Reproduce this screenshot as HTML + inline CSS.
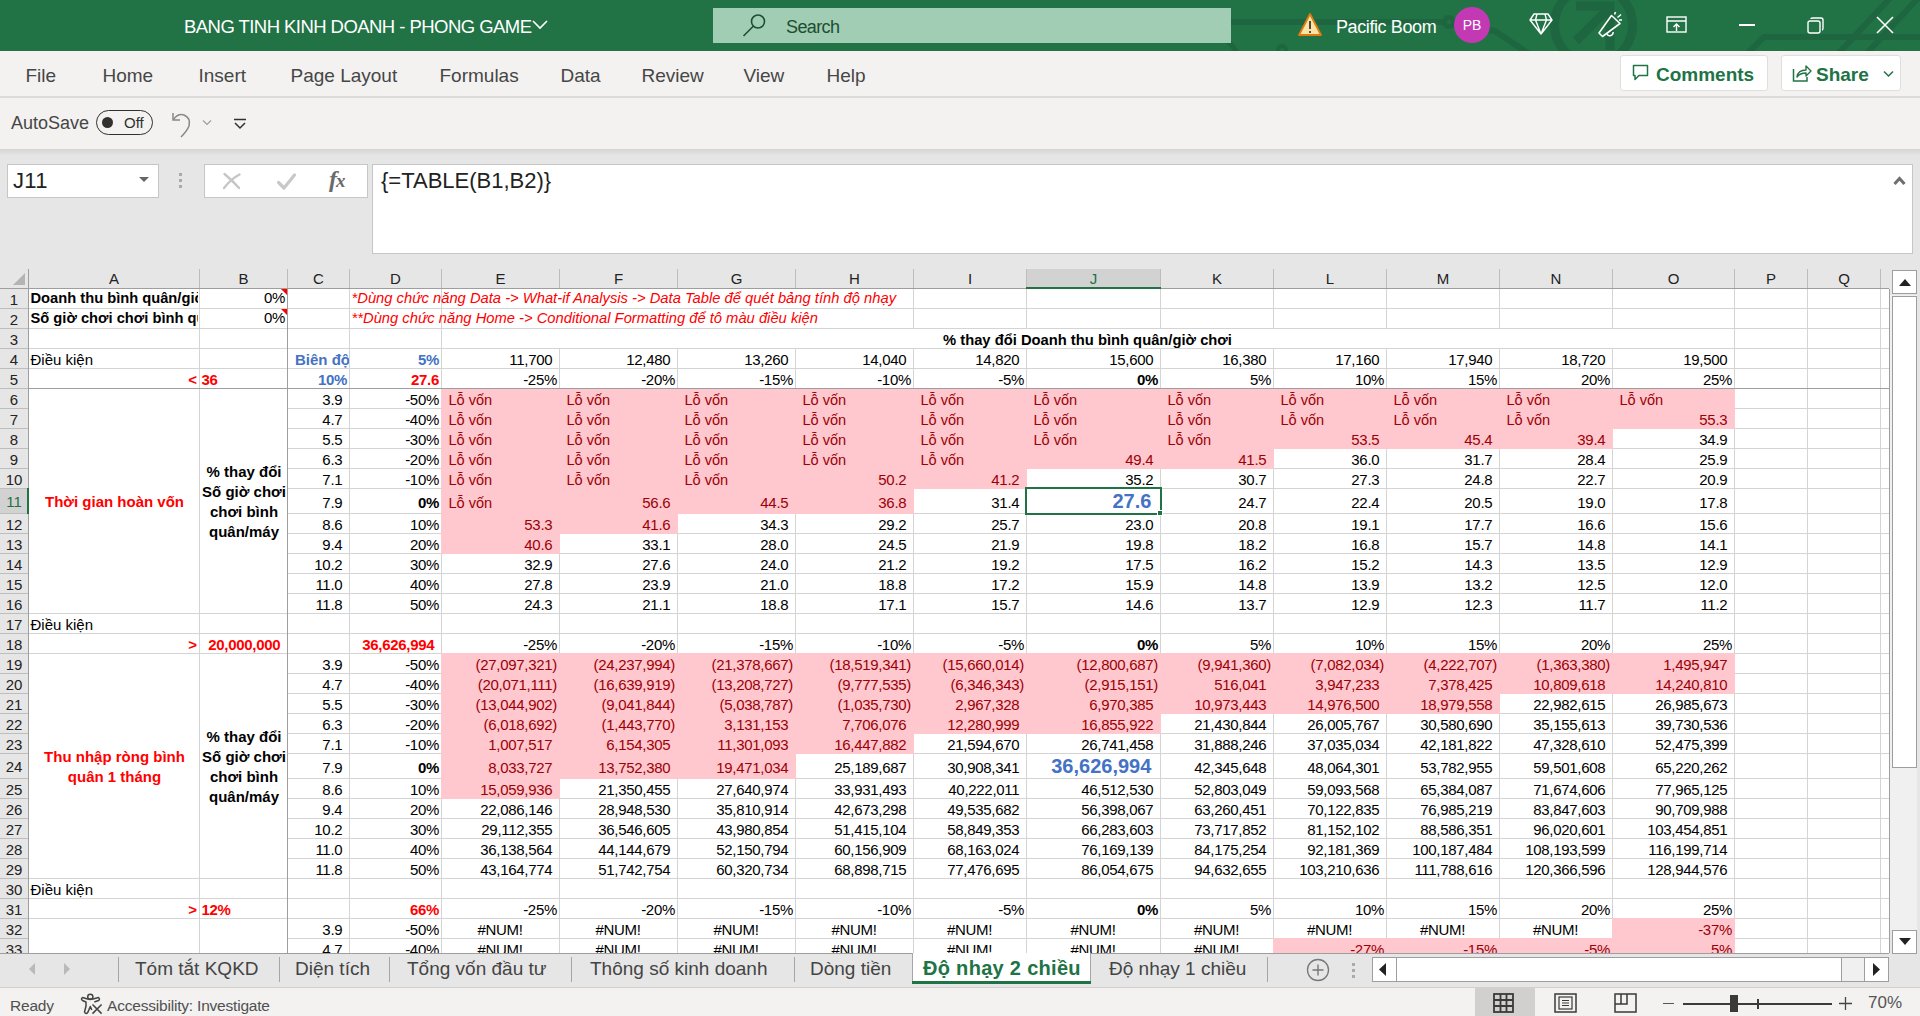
<!DOCTYPE html>
<html><head><meta charset="utf-8">
<style>
*{box-sizing:border-box}
html,body{margin:0;padding:0}
body{width:1920px;height:1016px;overflow:hidden;position:relative;font-family:"Liberation Sans",sans-serif;background:#e6e6e6}
.abs{position:absolute}
#title{position:absolute;left:0;top:0;width:1920px;height:51px;background:#217346;overflow:hidden}
#menu{position:absolute;left:0;top:51px;width:1920px;height:98px;background:#f3f2f1}
#fbar{position:absolute;left:0;top:149px;width:1920px;height:120px;background:#e6e6e6}
.mt{position:absolute;top:65px;font-size:19px;color:#464646;line-height:22px;white-space:nowrap}
#gridwrap{position:absolute;left:0;top:0;width:1920px;height:1016px}
.t{position:absolute;white-space:nowrap}
.pk{position:absolute;background:#ffc7ce}
.gl{position:absolute;background:#d4d4d4}
.wc{position:absolute;background:#fff}
.hl{position:absolute;background:#bdbdbd}
.ch{position:absolute;top:269px;height:19px;line-height:20px;font-size:15px;text-align:center}
.rh{position:absolute;left:0;width:28px;font-size:15px;text-align:center}
</style></head><body>
<!-- TITLE BAR -->
<div id="title">
  <svg class="abs" style="left:0;top:0" width="1920" height="51">
    <g stroke="#1e6640" fill="none">
      <path d="M1231 22 L1445 22" stroke-width="6"/>
      <circle cx="1449" cy="22" r="4.5" stroke-width="5"/>
      <path d="M1453 24 L1495 31 L1532 56" stroke-width="6"/>
      <path d="M1222 38 Q1234 44 1238 56" stroke-width="5"/>
      <circle cx="1282" cy="50" r="4" stroke-width="4"/>
      <circle cx="1593.5" cy="25" r="39" stroke-width="9"/>
      <path d="M1576 6 L1610 6 L1610 50 M1609 8 L1576 41" stroke-width="9"/>
      <path d="M1746 55 L1764 37 L1925 37" stroke-width="6"/>
      <path d="M1838 54 L1892 -4" stroke-width="6"/>
      <path d="M1866 54 L1920 -4" stroke-width="6"/>
    </g>
  </svg>
  <div class="abs" style="left:184px;top:16px;font-size:18.5px;line-height:22px;color:#fff;white-space:nowrap;letter-spacing:-0.55px">BANG TINH KINH DOANH - PHONG GAME</div>
  <svg class="abs" style="left:532px;top:19px" width="16" height="12"><path d="M1 2 L8 9 L15 2" stroke="#fff" stroke-width="1.6" fill="none"/></svg>
  <div class="abs" style="left:713px;top:8px;width:518px;height:35px;background:#a0cdb4"></div>
  <svg class="abs" style="left:740px;top:12px" width="28" height="26"><circle cx="18" cy="9.5" r="6.5" stroke="#1d4f31" stroke-width="1.6" fill="none"/><path d="M13.5 14 L3.5 24" stroke="#1d4f31" stroke-width="1.6"/></svg>
  <div class="abs" style="left:786px;top:16px;font-size:18px;line-height:22px;color:#1d4f31;white-space:nowrap;letter-spacing:-0.6px">Search</div>
  <svg class="abs" style="left:1297px;top:12px" width="26" height="26"><path d="M13 2 L24 23 L2 23 Z" fill="#fbe3a6" stroke="#e07b12" stroke-width="1.8" stroke-linejoin="round"/><path d="M13 9 L13 17" stroke="#222" stroke-width="1.6"/><circle cx="13" cy="20" r="1" fill="#222"/></svg>
  <div class="abs" style="left:1336px;top:16px;font-size:18px;line-height:22px;color:#fff;white-space:nowrap;letter-spacing:-0.4px">Pacific Boom</div>
  <div class="abs" style="left:1454px;top:7px;width:36px;height:36px;border-radius:50%;background:#c239b3;color:#fff;font-size:14px;line-height:36px;text-align:center">PB</div>
  <svg class="abs" style="left:1528px;top:12px" width="26" height="24"><path d="M6 2 L20 2 L24 8 L13 22 L2 8 Z M2 8 L24 8 M9 2 L7.5 8 L13 22 L18.5 8 L17 2" stroke="#fff" stroke-width="1.4" fill="none" stroke-linejoin="round"/></svg>
  <svg class="abs" style="left:1596px;top:10px" width="32" height="30"><path d="M3 23 L15.5 5.5 L24 13.5 L6.5 26.5 Z" stroke="#fff" stroke-width="1.6" fill="none" stroke-linejoin="round"/><path d="M11 24 a3.2 3.2 0 0 0 6 -2" stroke="#fff" stroke-width="1.6" fill="none"/><path d="M18.5 4.5 L19.5 2 M21.5 7.5 L25 4.5 M23 10 L26 10" stroke="#fff" stroke-width="1.6"/></svg>
  <svg class="abs" style="left:1666px;top:15px" width="22" height="20"><rect x="1" y="2" width="19" height="15" stroke="#fff" stroke-width="1.4" fill="none"/><path d="M1 6 L20 6 M10.5 16 L10.5 9 M7.5 12 L10.5 9 L13.5 12" stroke="#fff" stroke-width="1.4" fill="none"/></svg>
  <div class="abs" style="left:1739px;top:24px;width:16px;height:1.5px;background:#fff"></div>
  <svg class="abs" style="left:1806px;top:16px" width="20" height="20"><rect x="2" y="5" width="12" height="12" rx="2" stroke="#fff" stroke-width="1.4" fill="none"/><path d="M5 3 Q5 2 7 2 L15 2 Q17 2 17 4 L17 12 Q17 14 16 14" stroke="#fff" stroke-width="1.4" fill="none"/></svg>
  <svg class="abs" style="left:1876px;top:16px" width="18" height="18"><path d="M1 1 L17 17 M17 1 L1 17" stroke="#fff" stroke-width="1.6"/></svg>
</div>

<!-- MENU + QAT -->
<div id="menu">
</div>
<div class="mt" style="left:25.5px">File</div>
<div class="mt" style="left:102.5px">Home</div>
<div class="mt" style="left:198.5px">Insert</div>
<div class="mt" style="left:290.5px">Page Layout</div>
<div class="mt" style="left:439.5px">Formulas</div>
<div class="mt" style="left:560.5px">Data</div>
<div class="mt" style="left:641.5px">Review</div>
<div class="mt" style="left:743.5px">View</div>
<div class="mt" style="left:826.5px">Help</div>
<div class="abs" style="left:0;top:96px;width:1920px;height:2px;background:#dcdad8"></div>
<div class="abs" style="left:1620px;top:55px;width:148px;height:36px;background:#fff;border:1px solid #e1dfdd;border-radius:3px"></div>
<svg class="abs" style="left:1632px;top:64px" width="18" height="18"><path d="M1.5 1.5 L15.5 1.5 L15.5 11.5 L7 11.5 L3 15.5 L3 11.5 L1.5 11.5 Z" stroke="#217346" stroke-width="1.5" fill="none" stroke-linejoin="round"/></svg>
<div class="abs" style="left:1656px;top:64px;font-size:19px;line-height:22px;font-weight:bold;color:#217346;white-space:nowrap">Comments</div>
<div class="abs" style="left:1781px;top:55px;width:120px;height:36px;background:#fff;border:1px solid #e1dfdd;border-radius:3px"></div>
<svg class="abs" style="left:1792px;top:63px" width="20" height="20"><path d="M1.5 6 L1.5 18 L15 18 L15 14" stroke="#217346" stroke-width="1.5" fill="none"/><path d="M5 14 Q6 7 14 7 L14 3 L19 8 L14 13 L14 10 Q8 10 5 14 Z" stroke="#217346" stroke-width="1.4" fill="none" stroke-linejoin="round"/></svg>
<div class="abs" style="left:1816px;top:64px;font-size:19px;line-height:22px;font-weight:bold;color:#217346;white-space:nowrap">Share</div>
<svg class="abs" style="left:1883px;top:70px" width="12" height="8"><path d="M1 1.5 L5.5 6 L10 1.5" stroke="#217346" stroke-width="1.5" fill="none"/></svg>

<div class="abs" style="left:11px;top:112px;font-size:18px;line-height:22px;color:#464646;white-space:nowrap">AutoSave</div>
<div class="abs" style="left:96px;top:110px;width:57px;height:25px;border:1px solid #323130;border-radius:13px"></div>
<div class="abs" style="left:102px;top:117px;width:11px;height:11px;border-radius:50%;background:#323130"></div>
<div class="abs" style="left:124px;top:114px;font-size:15px;line-height:17px;color:#323130">Off</div>
<svg class="abs" style="left:170px;top:109px" width="26" height="30"><path d="M3 4 L3 11 L10 11" stroke="#8a8886" stroke-width="1.5" fill="none"/><path d="M3.5 10.5 Q8 4 14 6 Q21 9 19 17 Q17 22 11 28" stroke="#8a8886" stroke-width="1.5" fill="none"/></svg>
<svg class="abs" style="left:202px;top:119px" width="10" height="8"><path d="M1 1.5 L5 5.5 L9 1.5" stroke="#a19f9d" stroke-width="1.2" fill="none"/></svg>
<svg class="abs" style="left:233px;top:118px" width="14" height="12"><path d="M1 1.5 L13 1.5" stroke="#323130" stroke-width="1.5"/><path d="M2 5 L7 10 L12 5" stroke="#323130" stroke-width="1.5" fill="none"/></svg>

<!-- FORMULA BAR -->
<div id="fbar"></div>
<div class="abs" style="left:0;top:149px;width:1920px;height:7px;background:linear-gradient(#d5d5d5,#e6e6e6)"></div>
<div class="abs" style="left:7px;top:164px;width:152px;height:34px;background:#fff;border:1px solid #c6c6c6"></div>
<div class="abs" style="left:13px;top:168.5px;font-size:22px;line-height:24px;color:#222;letter-spacing:0.3px">J11</div>
<svg class="abs" style="left:139px;top:177px" width="10" height="6"><path d="M0 0 L10 0 L5 5 Z" fill="#666"/></svg>
<div class="abs" style="left:179px;top:173px;width:3px;height:3px;background:#aaa"></div>
<div class="abs" style="left:179px;top:179px;width:3px;height:3px;background:#aaa"></div>
<div class="abs" style="left:179px;top:185px;width:3px;height:3px;background:#aaa"></div>
<div class="abs" style="left:204px;top:164px;width:164px;height:34px;background:#fff;border:1px solid #c6c6c6"></div>
<svg class="abs" style="left:220px;top:171px" width="22" height="20"><path d="M4.5 3 Q12 9 19 17 M19.5 3.5 Q11 8 4 17" stroke="#c6c6c6" stroke-width="2.4" stroke-linecap="round" fill="none"/></svg>
<svg class="abs" style="left:275px;top:172px" width="22" height="19"><path d="M3.5 10.5 L9 16 L19.5 3" stroke="#c8c8c8" stroke-width="3.2" stroke-linecap="round" stroke-linejoin="round" fill="none"/></svg>
<div class="abs" style="left:329px;top:165px;font-family:'Liberation Serif',serif;font-style:italic;font-weight:bold;font-size:24px;line-height:28px;color:#6a6a6a">f<span style="font-size:19px;margin-left:-1px">x</span></div>
<div class="abs" style="left:372px;top:164px;width:1541px;height:90px;background:#fff;border:1px solid #c6c6c6"></div>
<div class="abs" style="left:381px;top:169px;font-size:22px;line-height:24px;color:#222;white-space:nowrap">{=TABLE(B1,B2)}</div>
<svg class="abs" style="left:1893px;top:176px" width="13" height="10"><path d="M1.5 8 L6.5 2.5 L11.5 8" stroke="#6e6e6e" stroke-width="3" fill="none" stroke-linejoin="miter"/></svg>

<!-- GRID -->
<div class="abs" style="left:29px;top:289px;width:1860px;height:664px;background:#fff"></div>
<div class="gl" style="left:199px;top:289px;width:1px;height:664px"></div><div class="gl" style="left:287px;top:289px;width:1px;height:664px"></div><div class="gl" style="left:349px;top:289px;width:1px;height:664px"></div><div class="gl" style="left:441px;top:289px;width:1px;height:664px"></div><div class="gl" style="left:559px;top:289px;width:1px;height:664px"></div><div class="gl" style="left:677px;top:289px;width:1px;height:664px"></div><div class="gl" style="left:795px;top:289px;width:1px;height:664px"></div><div class="gl" style="left:913px;top:289px;width:1px;height:664px"></div><div class="gl" style="left:1026px;top:289px;width:1px;height:664px"></div><div class="gl" style="left:1160px;top:289px;width:1px;height:664px"></div><div class="gl" style="left:1273px;top:289px;width:1px;height:664px"></div><div class="gl" style="left:1386px;top:289px;width:1px;height:664px"></div><div class="gl" style="left:1499px;top:289px;width:1px;height:664px"></div><div class="gl" style="left:1612px;top:289px;width:1px;height:664px"></div><div class="gl" style="left:1734px;top:289px;width:1px;height:664px"></div><div class="gl" style="left:1807px;top:289px;width:1px;height:664px"></div><div class="gl" style="left:1880px;top:289px;width:1px;height:664px"></div><div class="gl" style="left:29px;top:308px;width:1860px;height:1px"></div><div class="gl" style="left:29px;top:328px;width:1860px;height:1px"></div><div class="gl" style="left:29px;top:348px;width:1860px;height:1px"></div><div class="gl" style="left:29px;top:368px;width:1860px;height:1px"></div><div class="gl" style="left:29px;top:388px;width:1860px;height:1px"></div><div class="gl" style="left:29px;top:408px;width:1860px;height:1px"></div><div class="gl" style="left:29px;top:428px;width:1860px;height:1px"></div><div class="gl" style="left:29px;top:448px;width:1860px;height:1px"></div><div class="gl" style="left:29px;top:468px;width:1860px;height:1px"></div><div class="gl" style="left:29px;top:488px;width:1860px;height:1px"></div><div class="gl" style="left:29px;top:513px;width:1860px;height:1px"></div><div class="gl" style="left:29px;top:533px;width:1860px;height:1px"></div><div class="gl" style="left:29px;top:553px;width:1860px;height:1px"></div><div class="gl" style="left:29px;top:573px;width:1860px;height:1px"></div><div class="gl" style="left:29px;top:593px;width:1860px;height:1px"></div><div class="gl" style="left:29px;top:613px;width:1860px;height:1px"></div><div class="gl" style="left:29px;top:633px;width:1860px;height:1px"></div><div class="gl" style="left:29px;top:653px;width:1860px;height:1px"></div><div class="gl" style="left:29px;top:673px;width:1860px;height:1px"></div><div class="gl" style="left:29px;top:693px;width:1860px;height:1px"></div><div class="gl" style="left:29px;top:713px;width:1860px;height:1px"></div><div class="gl" style="left:29px;top:733px;width:1860px;height:1px"></div><div class="gl" style="left:29px;top:753px;width:1860px;height:1px"></div><div class="gl" style="left:29px;top:778px;width:1860px;height:1px"></div><div class="gl" style="left:29px;top:798px;width:1860px;height:1px"></div><div class="gl" style="left:29px;top:818px;width:1860px;height:1px"></div><div class="gl" style="left:29px;top:838px;width:1860px;height:1px"></div><div class="gl" style="left:29px;top:858px;width:1860px;height:1px"></div><div class="gl" style="left:29px;top:878px;width:1860px;height:1px"></div><div class="gl" style="left:29px;top:898px;width:1860px;height:1px"></div><div class="gl" style="left:29px;top:918px;width:1860px;height:1px"></div><div class="gl" style="left:29px;top:938px;width:1860px;height:1px"></div>
<div class="wc" style="left:442px;top:289px;width:471px;height:19px"></div><div class="wc" style="left:442px;top:309px;width:471px;height:19px"></div><div class="wc" style="left:442px;top:329px;width:1292px;height:19px"></div><div class="wc" style="left:29px;top:389px;width:170px;height:224px"></div><div class="wc" style="left:200px;top:389px;width:87px;height:224px"></div><div class="wc" style="left:29px;top:654px;width:170px;height:224px"></div><div class="wc" style="left:200px;top:654px;width:87px;height:224px"></div><div class="wc" style="left:29px;top:919px;width:170px;height:34px"></div><div class="wc" style="left:200px;top:919px;width:87px;height:34px"></div>
<div class="pk" style="left:441px;top:388px;width:119px;height:21px"></div><div class="pk" style="left:559px;top:388px;width:119px;height:21px"></div><div class="pk" style="left:677px;top:388px;width:119px;height:21px"></div><div class="pk" style="left:795px;top:388px;width:119px;height:21px"></div><div class="pk" style="left:913px;top:388px;width:114px;height:21px"></div><div class="pk" style="left:1026px;top:388px;width:135px;height:21px"></div><div class="pk" style="left:1160px;top:388px;width:114px;height:21px"></div><div class="pk" style="left:1273px;top:388px;width:114px;height:21px"></div><div class="pk" style="left:1386px;top:388px;width:114px;height:21px"></div><div class="pk" style="left:1499px;top:388px;width:114px;height:21px"></div><div class="pk" style="left:1612px;top:388px;width:123px;height:21px"></div><div class="pk" style="left:441px;top:653px;width:119px;height:21px"></div><div class="pk" style="left:559px;top:653px;width:119px;height:21px"></div><div class="pk" style="left:677px;top:653px;width:119px;height:21px"></div><div class="pk" style="left:795px;top:653px;width:119px;height:21px"></div><div class="pk" style="left:913px;top:653px;width:114px;height:21px"></div><div class="pk" style="left:1026px;top:653px;width:135px;height:21px"></div><div class="pk" style="left:1160px;top:653px;width:114px;height:21px"></div><div class="pk" style="left:1273px;top:653px;width:114px;height:21px"></div><div class="pk" style="left:1386px;top:653px;width:114px;height:21px"></div><div class="pk" style="left:1499px;top:653px;width:114px;height:21px"></div><div class="pk" style="left:1612px;top:653px;width:123px;height:21px"></div><div class="pk" style="left:441px;top:408px;width:119px;height:21px"></div><div class="pk" style="left:559px;top:408px;width:119px;height:21px"></div><div class="pk" style="left:677px;top:408px;width:119px;height:21px"></div><div class="pk" style="left:795px;top:408px;width:119px;height:21px"></div><div class="pk" style="left:913px;top:408px;width:114px;height:21px"></div><div class="pk" style="left:1026px;top:408px;width:135px;height:21px"></div><div class="pk" style="left:1160px;top:408px;width:114px;height:21px"></div><div class="pk" style="left:1273px;top:408px;width:114px;height:21px"></div><div class="pk" style="left:1386px;top:408px;width:114px;height:21px"></div><div class="pk" style="left:1499px;top:408px;width:114px;height:21px"></div><div class="pk" style="left:1612px;top:408px;width:123px;height:21px"></div><div class="pk" style="left:441px;top:673px;width:119px;height:21px"></div><div class="pk" style="left:559px;top:673px;width:119px;height:21px"></div><div class="pk" style="left:677px;top:673px;width:119px;height:21px"></div><div class="pk" style="left:795px;top:673px;width:119px;height:21px"></div><div class="pk" style="left:913px;top:673px;width:114px;height:21px"></div><div class="pk" style="left:1026px;top:673px;width:135px;height:21px"></div><div class="pk" style="left:1160px;top:673px;width:114px;height:21px"></div><div class="pk" style="left:1273px;top:673px;width:114px;height:21px"></div><div class="pk" style="left:1386px;top:673px;width:114px;height:21px"></div><div class="pk" style="left:1499px;top:673px;width:114px;height:21px"></div><div class="pk" style="left:1612px;top:673px;width:123px;height:21px"></div><div class="pk" style="left:441px;top:428px;width:119px;height:21px"></div><div class="pk" style="left:559px;top:428px;width:119px;height:21px"></div><div class="pk" style="left:677px;top:428px;width:119px;height:21px"></div><div class="pk" style="left:795px;top:428px;width:119px;height:21px"></div><div class="pk" style="left:913px;top:428px;width:114px;height:21px"></div><div class="pk" style="left:1026px;top:428px;width:135px;height:21px"></div><div class="pk" style="left:1160px;top:428px;width:114px;height:21px"></div><div class="pk" style="left:1273px;top:428px;width:114px;height:21px"></div><div class="pk" style="left:1386px;top:428px;width:114px;height:21px"></div><div class="pk" style="left:1499px;top:428px;width:114px;height:21px"></div><div class="pk" style="left:441px;top:693px;width:119px;height:21px"></div><div class="pk" style="left:559px;top:693px;width:119px;height:21px"></div><div class="pk" style="left:677px;top:693px;width:119px;height:21px"></div><div class="pk" style="left:795px;top:693px;width:119px;height:21px"></div><div class="pk" style="left:913px;top:693px;width:114px;height:21px"></div><div class="pk" style="left:1026px;top:693px;width:135px;height:21px"></div><div class="pk" style="left:1160px;top:693px;width:114px;height:21px"></div><div class="pk" style="left:1273px;top:693px;width:114px;height:21px"></div><div class="pk" style="left:1386px;top:693px;width:114px;height:21px"></div><div class="pk" style="left:441px;top:448px;width:119px;height:21px"></div><div class="pk" style="left:559px;top:448px;width:119px;height:21px"></div><div class="pk" style="left:677px;top:448px;width:119px;height:21px"></div><div class="pk" style="left:795px;top:448px;width:119px;height:21px"></div><div class="pk" style="left:913px;top:448px;width:114px;height:21px"></div><div class="pk" style="left:1026px;top:448px;width:135px;height:21px"></div><div class="pk" style="left:1160px;top:448px;width:114px;height:21px"></div><div class="pk" style="left:441px;top:713px;width:119px;height:21px"></div><div class="pk" style="left:559px;top:713px;width:119px;height:21px"></div><div class="pk" style="left:677px;top:713px;width:119px;height:21px"></div><div class="pk" style="left:795px;top:713px;width:119px;height:21px"></div><div class="pk" style="left:913px;top:713px;width:114px;height:21px"></div><div class="pk" style="left:1026px;top:713px;width:135px;height:21px"></div><div class="pk" style="left:441px;top:468px;width:119px;height:21px"></div><div class="pk" style="left:559px;top:468px;width:119px;height:21px"></div><div class="pk" style="left:677px;top:468px;width:119px;height:21px"></div><div class="pk" style="left:795px;top:468px;width:119px;height:21px"></div><div class="pk" style="left:913px;top:468px;width:114px;height:21px"></div><div class="pk" style="left:441px;top:733px;width:119px;height:21px"></div><div class="pk" style="left:559px;top:733px;width:119px;height:21px"></div><div class="pk" style="left:677px;top:733px;width:119px;height:21px"></div><div class="pk" style="left:795px;top:733px;width:119px;height:21px"></div><div class="pk" style="left:441px;top:488px;width:119px;height:26px"></div><div class="pk" style="left:559px;top:488px;width:119px;height:26px"></div><div class="pk" style="left:677px;top:488px;width:119px;height:26px"></div><div class="pk" style="left:795px;top:488px;width:119px;height:26px"></div><div class="pk" style="left:441px;top:753px;width:119px;height:26px"></div><div class="pk" style="left:559px;top:753px;width:119px;height:26px"></div><div class="pk" style="left:677px;top:753px;width:119px;height:26px"></div><div class="pk" style="left:441px;top:513px;width:119px;height:21px"></div><div class="pk" style="left:559px;top:513px;width:119px;height:21px"></div><div class="pk" style="left:441px;top:778px;width:119px;height:21px"></div><div class="pk" style="left:441px;top:533px;width:119px;height:21px"></div><div class="pk" style="left:1612px;top:918px;width:123px;height:21px"></div><div class="pk" style="left:1273px;top:938px;width:114px;height:21px"></div><div class="pk" style="left:1386px;top:938px;width:114px;height:21px"></div><div class="pk" style="left:1499px;top:938px;width:114px;height:21px"></div><div class="pk" style="left:1612px;top:938px;width:123px;height:21px"></div>
<!-- freeze lines -->
<div class="abs" style="left:29px;top:388px;width:1860px;height:1px;background:#9e9e9e"></div>
<div class="abs" style="left:287px;top:289px;width:1px;height:664px;background:#9e9e9e"></div>
<div class="t" style="top:288.14px;height:20px;line-height:20px;font-size:14.7px;color:#000;letter-spacing:0px;font-weight:bold;left:30.5px;text-align:left;width:167.5px;overflow:hidden;">Doanh thu bình quân/giờ chơi</div><div class="t" style="top:308.14px;height:20px;line-height:20px;font-size:14.7px;color:#000;letter-spacing:0px;font-weight:bold;left:30.5px;text-align:left;width:167.5px;overflow:hidden;">Số giờ chơi chơi bình quân/máy</div><div class="t" style="top:288.04px;height:20px;line-height:20px;font-size:15px;color:#000;letter-spacing:-0.3px;left:-1px;width:286px;text-align:right;">0%</div><div class="t" style="top:308.04px;height:20px;line-height:20px;font-size:15px;color:#000;letter-spacing:-0.3px;left:-1px;width:286px;text-align:right;">0%</div><div class="t" style="top:288.13px;height:20px;line-height:20px;font-size:14.75px;color:#ff0000;letter-spacing:0px;font-style:italic;left:351.5px;text-align:left;">*Dùng chức năng Data -&gt; What-if Analysis -&gt; Data Table để quét bảng tính độ nhạy</div><div class="t" style="top:308.13px;height:20px;line-height:20px;font-size:14.75px;color:#ff0000;letter-spacing:0px;font-style:italic;left:351.5px;text-align:left;">**Dùng chức năng Home -&gt; Conditional Formatting để tô màu điều kiện</div><div class="t" style="top:329.63px;height:20px;line-height:20px;font-size:14.75px;color:#000;letter-spacing:0px;font-weight:bold;left:441px;width:1293px;text-align:center;">% thay đổi Doanh thu bình quân/giờ chơi</div><div class="t" style="top:349.54px;height:20px;line-height:20px;font-size:15px;color:#000;letter-spacing:0px;left:30.5px;text-align:left;">Điều kiện</div><div class="t" style="top:349.54px;height:20px;line-height:20px;font-size:15px;color:#4472c4;letter-spacing:0px;font-weight:bold;left:289.5px;text-align:left;left:295px;width:54px;overflow:hidden;">Biên độ</div><div class="t" style="top:349.54px;height:20px;line-height:20px;font-size:15px;color:#4472c4;letter-spacing:-0.3px;font-weight:bold;left:149px;width:290px;text-align:right;">5%</div><div class="t" style="top:349.54px;height:20px;line-height:20px;font-size:15px;color:#000;letter-spacing:-0.3px;left:241px;width:316px;text-align:right;">11,700<span style="visibility:hidden">)</span></div><div class="t" style="top:349.54px;height:20px;line-height:20px;font-size:15px;color:#000;letter-spacing:-0.3px;left:359px;width:316px;text-align:right;">12,480<span style="visibility:hidden">)</span></div><div class="t" style="top:349.54px;height:20px;line-height:20px;font-size:15px;color:#000;letter-spacing:-0.3px;left:477px;width:316px;text-align:right;">13,260<span style="visibility:hidden">)</span></div><div class="t" style="top:349.54px;height:20px;line-height:20px;font-size:15px;color:#000;letter-spacing:-0.3px;left:595px;width:316px;text-align:right;">14,040<span style="visibility:hidden">)</span></div><div class="t" style="top:349.54px;height:20px;line-height:20px;font-size:15px;color:#000;letter-spacing:-0.3px;left:713px;width:311px;text-align:right;">14,820<span style="visibility:hidden">)</span></div><div class="t" style="top:349.54px;height:20px;line-height:20px;font-size:15px;color:#000;letter-spacing:-0.3px;left:826px;width:332px;text-align:right;">15,600<span style="visibility:hidden">)</span></div><div class="t" style="top:349.54px;height:20px;line-height:20px;font-size:15px;color:#000;letter-spacing:-0.3px;left:960px;width:311px;text-align:right;">16,380<span style="visibility:hidden">)</span></div><div class="t" style="top:349.54px;height:20px;line-height:20px;font-size:15px;color:#000;letter-spacing:-0.3px;left:1073px;width:311px;text-align:right;">17,160<span style="visibility:hidden">)</span></div><div class="t" style="top:349.54px;height:20px;line-height:20px;font-size:15px;color:#000;letter-spacing:-0.3px;left:1186px;width:311px;text-align:right;">17,940<span style="visibility:hidden">)</span></div><div class="t" style="top:349.54px;height:20px;line-height:20px;font-size:15px;color:#000;letter-spacing:-0.3px;left:1299px;width:311px;text-align:right;">18,720<span style="visibility:hidden">)</span></div><div class="t" style="top:349.54px;height:20px;line-height:20px;font-size:15px;color:#000;letter-spacing:-0.3px;left:1412px;width:320px;text-align:right;">19,500<span style="visibility:hidden">)</span></div><div class="t" style="top:369.54px;height:20px;line-height:20px;font-size:15px;color:#ff0000;letter-spacing:0px;font-weight:bold;left:-172px;width:369px;text-align:right;">&lt;</div><div class="t" style="top:369.54px;height:20px;line-height:20px;font-size:15px;color:#ff0000;letter-spacing:-0.3px;font-weight:bold;left:201.5px;text-align:left;">36</div><div class="t" style="top:369.54px;height:20px;line-height:20px;font-size:15px;color:#4472c4;letter-spacing:-0.3px;font-weight:bold;left:87px;width:260px;text-align:right;">10%</div><div class="t" style="top:369.54px;height:20px;line-height:20px;font-size:15px;color:#ff0000;letter-spacing:-0.3px;font-weight:bold;left:149px;width:290px;text-align:right;">27.6</div><div class="t" style="top:369.54px;height:20px;line-height:20px;font-size:15px;color:#000;letter-spacing:-0.3px;left:241px;width:316px;text-align:right;">-25%</div><div class="t" style="top:369.54px;height:20px;line-height:20px;font-size:15px;color:#000;letter-spacing:-0.3px;left:359px;width:316px;text-align:right;">-20%</div><div class="t" style="top:369.54px;height:20px;line-height:20px;font-size:15px;color:#000;letter-spacing:-0.3px;left:477px;width:316px;text-align:right;">-15%</div><div class="t" style="top:369.54px;height:20px;line-height:20px;font-size:15px;color:#000;letter-spacing:-0.3px;left:595px;width:316px;text-align:right;">-10%</div><div class="t" style="top:369.54px;height:20px;line-height:20px;font-size:15px;color:#000;letter-spacing:-0.3px;left:713px;width:311px;text-align:right;">-5%</div><div class="t" style="top:369.54px;height:20px;line-height:20px;font-size:15px;color:#000;letter-spacing:-0.3px;font-weight:bold;left:826px;width:332px;text-align:right;">0%</div><div class="t" style="top:369.54px;height:20px;line-height:20px;font-size:15px;color:#000;letter-spacing:-0.3px;left:960px;width:311px;text-align:right;">5%</div><div class="t" style="top:369.54px;height:20px;line-height:20px;font-size:15px;color:#000;letter-spacing:-0.3px;left:1073px;width:311px;text-align:right;">10%</div><div class="t" style="top:369.54px;height:20px;line-height:20px;font-size:15px;color:#000;letter-spacing:-0.3px;left:1186px;width:311px;text-align:right;">15%</div><div class="t" style="top:369.54px;height:20px;line-height:20px;font-size:15px;color:#000;letter-spacing:-0.3px;left:1299px;width:311px;text-align:right;">20%</div><div class="t" style="top:369.54px;height:20px;line-height:20px;font-size:15px;color:#000;letter-spacing:-0.3px;left:1412px;width:320px;text-align:right;">25%</div><div class="t" style="top:634.54px;height:20px;line-height:20px;font-size:15px;color:#000;letter-spacing:-0.3px;left:241px;width:316px;text-align:right;">-25%</div><div class="t" style="top:634.54px;height:20px;line-height:20px;font-size:15px;color:#000;letter-spacing:-0.3px;left:359px;width:316px;text-align:right;">-20%</div><div class="t" style="top:634.54px;height:20px;line-height:20px;font-size:15px;color:#000;letter-spacing:-0.3px;left:477px;width:316px;text-align:right;">-15%</div><div class="t" style="top:634.54px;height:20px;line-height:20px;font-size:15px;color:#000;letter-spacing:-0.3px;left:595px;width:316px;text-align:right;">-10%</div><div class="t" style="top:634.54px;height:20px;line-height:20px;font-size:15px;color:#000;letter-spacing:-0.3px;left:713px;width:311px;text-align:right;">-5%</div><div class="t" style="top:634.54px;height:20px;line-height:20px;font-size:15px;color:#000;letter-spacing:-0.3px;font-weight:bold;left:826px;width:332px;text-align:right;">0%</div><div class="t" style="top:634.54px;height:20px;line-height:20px;font-size:15px;color:#000;letter-spacing:-0.3px;left:960px;width:311px;text-align:right;">5%</div><div class="t" style="top:634.54px;height:20px;line-height:20px;font-size:15px;color:#000;letter-spacing:-0.3px;left:1073px;width:311px;text-align:right;">10%</div><div class="t" style="top:634.54px;height:20px;line-height:20px;font-size:15px;color:#000;letter-spacing:-0.3px;left:1186px;width:311px;text-align:right;">15%</div><div class="t" style="top:634.54px;height:20px;line-height:20px;font-size:15px;color:#000;letter-spacing:-0.3px;left:1299px;width:311px;text-align:right;">20%</div><div class="t" style="top:634.54px;height:20px;line-height:20px;font-size:15px;color:#000;letter-spacing:-0.3px;left:1412px;width:320px;text-align:right;">25%</div><div class="t" style="top:899.54px;height:20px;line-height:20px;font-size:15px;color:#000;letter-spacing:-0.3px;left:241px;width:316px;text-align:right;">-25%</div><div class="t" style="top:899.54px;height:20px;line-height:20px;font-size:15px;color:#000;letter-spacing:-0.3px;left:359px;width:316px;text-align:right;">-20%</div><div class="t" style="top:899.54px;height:20px;line-height:20px;font-size:15px;color:#000;letter-spacing:-0.3px;left:477px;width:316px;text-align:right;">-15%</div><div class="t" style="top:899.54px;height:20px;line-height:20px;font-size:15px;color:#000;letter-spacing:-0.3px;left:595px;width:316px;text-align:right;">-10%</div><div class="t" style="top:899.54px;height:20px;line-height:20px;font-size:15px;color:#000;letter-spacing:-0.3px;left:713px;width:311px;text-align:right;">-5%</div><div class="t" style="top:899.54px;height:20px;line-height:20px;font-size:15px;color:#000;letter-spacing:-0.3px;font-weight:bold;left:826px;width:332px;text-align:right;">0%</div><div class="t" style="top:899.54px;height:20px;line-height:20px;font-size:15px;color:#000;letter-spacing:-0.3px;left:960px;width:311px;text-align:right;">5%</div><div class="t" style="top:899.54px;height:20px;line-height:20px;font-size:15px;color:#000;letter-spacing:-0.3px;left:1073px;width:311px;text-align:right;">10%</div><div class="t" style="top:899.54px;height:20px;line-height:20px;font-size:15px;color:#000;letter-spacing:-0.3px;left:1186px;width:311px;text-align:right;">15%</div><div class="t" style="top:899.54px;height:20px;line-height:20px;font-size:15px;color:#000;letter-spacing:-0.3px;left:1299px;width:311px;text-align:right;">20%</div><div class="t" style="top:899.54px;height:20px;line-height:20px;font-size:15px;color:#000;letter-spacing:-0.3px;left:1412px;width:320px;text-align:right;">25%</div><div class="t" style="top:389.54px;height:20px;line-height:20px;font-size:15px;color:#000;letter-spacing:-0.3px;left:87px;width:260px;text-align:right;">3.9<span style="visibility:hidden">)</span></div><div class="t" style="top:389.54px;height:20px;line-height:20px;font-size:15px;color:#000;letter-spacing:-0.3px;left:149px;width:290px;text-align:right;">-50%</div><div class="t" style="top:654.54px;height:20px;line-height:20px;font-size:15px;color:#000;letter-spacing:-0.3px;left:87px;width:260px;text-align:right;">3.9<span style="visibility:hidden">)</span></div><div class="t" style="top:654.54px;height:20px;line-height:20px;font-size:15px;color:#000;letter-spacing:-0.3px;left:149px;width:290px;text-align:right;">-50%</div><div class="t" style="top:409.54px;height:20px;line-height:20px;font-size:15px;color:#000;letter-spacing:-0.3px;left:87px;width:260px;text-align:right;">4.7<span style="visibility:hidden">)</span></div><div class="t" style="top:409.54px;height:20px;line-height:20px;font-size:15px;color:#000;letter-spacing:-0.3px;left:149px;width:290px;text-align:right;">-40%</div><div class="t" style="top:674.54px;height:20px;line-height:20px;font-size:15px;color:#000;letter-spacing:-0.3px;left:87px;width:260px;text-align:right;">4.7<span style="visibility:hidden">)</span></div><div class="t" style="top:674.54px;height:20px;line-height:20px;font-size:15px;color:#000;letter-spacing:-0.3px;left:149px;width:290px;text-align:right;">-40%</div><div class="t" style="top:429.54px;height:20px;line-height:20px;font-size:15px;color:#000;letter-spacing:-0.3px;left:87px;width:260px;text-align:right;">5.5<span style="visibility:hidden">)</span></div><div class="t" style="top:429.54px;height:20px;line-height:20px;font-size:15px;color:#000;letter-spacing:-0.3px;left:149px;width:290px;text-align:right;">-30%</div><div class="t" style="top:694.54px;height:20px;line-height:20px;font-size:15px;color:#000;letter-spacing:-0.3px;left:87px;width:260px;text-align:right;">5.5<span style="visibility:hidden">)</span></div><div class="t" style="top:694.54px;height:20px;line-height:20px;font-size:15px;color:#000;letter-spacing:-0.3px;left:149px;width:290px;text-align:right;">-30%</div><div class="t" style="top:449.54px;height:20px;line-height:20px;font-size:15px;color:#000;letter-spacing:-0.3px;left:87px;width:260px;text-align:right;">6.3<span style="visibility:hidden">)</span></div><div class="t" style="top:449.54px;height:20px;line-height:20px;font-size:15px;color:#000;letter-spacing:-0.3px;left:149px;width:290px;text-align:right;">-20%</div><div class="t" style="top:714.54px;height:20px;line-height:20px;font-size:15px;color:#000;letter-spacing:-0.3px;left:87px;width:260px;text-align:right;">6.3<span style="visibility:hidden">)</span></div><div class="t" style="top:714.54px;height:20px;line-height:20px;font-size:15px;color:#000;letter-spacing:-0.3px;left:149px;width:290px;text-align:right;">-20%</div><div class="t" style="top:469.54px;height:20px;line-height:20px;font-size:15px;color:#000;letter-spacing:-0.3px;left:87px;width:260px;text-align:right;">7.1<span style="visibility:hidden">)</span></div><div class="t" style="top:469.54px;height:20px;line-height:20px;font-size:15px;color:#000;letter-spacing:-0.3px;left:149px;width:290px;text-align:right;">-10%</div><div class="t" style="top:734.54px;height:20px;line-height:20px;font-size:15px;color:#000;letter-spacing:-0.3px;left:87px;width:260px;text-align:right;">7.1<span style="visibility:hidden">)</span></div><div class="t" style="top:734.54px;height:20px;line-height:20px;font-size:15px;color:#000;letter-spacing:-0.3px;left:149px;width:290px;text-align:right;">-10%</div><div class="t" style="top:493.04px;height:20px;line-height:20px;font-size:15px;color:#000;letter-spacing:-0.3px;left:87px;width:260px;text-align:right;">7.9<span style="visibility:hidden">)</span></div><div class="t" style="top:493.04px;height:20px;line-height:20px;font-size:15px;color:#000;letter-spacing:-0.3px;font-weight:bold;left:149px;width:290px;text-align:right;">0%</div><div class="t" style="top:758.04px;height:20px;line-height:20px;font-size:15px;color:#000;letter-spacing:-0.3px;left:87px;width:260px;text-align:right;">7.9<span style="visibility:hidden">)</span></div><div class="t" style="top:758.04px;height:20px;line-height:20px;font-size:15px;color:#000;letter-spacing:-0.3px;font-weight:bold;left:149px;width:290px;text-align:right;">0%</div><div class="t" style="top:514.54px;height:20px;line-height:20px;font-size:15px;color:#000;letter-spacing:-0.3px;left:87px;width:260px;text-align:right;">8.6<span style="visibility:hidden">)</span></div><div class="t" style="top:514.54px;height:20px;line-height:20px;font-size:15px;color:#000;letter-spacing:-0.3px;left:149px;width:290px;text-align:right;">10%</div><div class="t" style="top:779.54px;height:20px;line-height:20px;font-size:15px;color:#000;letter-spacing:-0.3px;left:87px;width:260px;text-align:right;">8.6<span style="visibility:hidden">)</span></div><div class="t" style="top:779.54px;height:20px;line-height:20px;font-size:15px;color:#000;letter-spacing:-0.3px;left:149px;width:290px;text-align:right;">10%</div><div class="t" style="top:534.54px;height:20px;line-height:20px;font-size:15px;color:#000;letter-spacing:-0.3px;left:87px;width:260px;text-align:right;">9.4<span style="visibility:hidden">)</span></div><div class="t" style="top:534.54px;height:20px;line-height:20px;font-size:15px;color:#000;letter-spacing:-0.3px;left:149px;width:290px;text-align:right;">20%</div><div class="t" style="top:799.54px;height:20px;line-height:20px;font-size:15px;color:#000;letter-spacing:-0.3px;left:87px;width:260px;text-align:right;">9.4<span style="visibility:hidden">)</span></div><div class="t" style="top:799.54px;height:20px;line-height:20px;font-size:15px;color:#000;letter-spacing:-0.3px;left:149px;width:290px;text-align:right;">20%</div><div class="t" style="top:554.54px;height:20px;line-height:20px;font-size:15px;color:#000;letter-spacing:-0.3px;left:87px;width:260px;text-align:right;">10.2<span style="visibility:hidden">)</span></div><div class="t" style="top:554.54px;height:20px;line-height:20px;font-size:15px;color:#000;letter-spacing:-0.3px;left:149px;width:290px;text-align:right;">30%</div><div class="t" style="top:819.54px;height:20px;line-height:20px;font-size:15px;color:#000;letter-spacing:-0.3px;left:87px;width:260px;text-align:right;">10.2<span style="visibility:hidden">)</span></div><div class="t" style="top:819.54px;height:20px;line-height:20px;font-size:15px;color:#000;letter-spacing:-0.3px;left:149px;width:290px;text-align:right;">30%</div><div class="t" style="top:574.54px;height:20px;line-height:20px;font-size:15px;color:#000;letter-spacing:-0.3px;left:87px;width:260px;text-align:right;">11.0<span style="visibility:hidden">)</span></div><div class="t" style="top:574.54px;height:20px;line-height:20px;font-size:15px;color:#000;letter-spacing:-0.3px;left:149px;width:290px;text-align:right;">40%</div><div class="t" style="top:839.54px;height:20px;line-height:20px;font-size:15px;color:#000;letter-spacing:-0.3px;left:87px;width:260px;text-align:right;">11.0<span style="visibility:hidden">)</span></div><div class="t" style="top:839.54px;height:20px;line-height:20px;font-size:15px;color:#000;letter-spacing:-0.3px;left:149px;width:290px;text-align:right;">40%</div><div class="t" style="top:594.54px;height:20px;line-height:20px;font-size:15px;color:#000;letter-spacing:-0.3px;left:87px;width:260px;text-align:right;">11.8<span style="visibility:hidden">)</span></div><div class="t" style="top:594.54px;height:20px;line-height:20px;font-size:15px;color:#000;letter-spacing:-0.3px;left:149px;width:290px;text-align:right;">50%</div><div class="t" style="top:859.54px;height:20px;line-height:20px;font-size:15px;color:#000;letter-spacing:-0.3px;left:87px;width:260px;text-align:right;">11.8<span style="visibility:hidden">)</span></div><div class="t" style="top:859.54px;height:20px;line-height:20px;font-size:15px;color:#000;letter-spacing:-0.3px;left:149px;width:290px;text-align:right;">50%</div><div class="t" style="top:919.54px;height:20px;line-height:20px;font-size:15px;color:#000;letter-spacing:-0.3px;left:87px;width:260px;text-align:right;">3.9<span style="visibility:hidden">)</span></div><div class="t" style="top:919.54px;height:20px;line-height:20px;font-size:15px;color:#000;letter-spacing:-0.3px;left:149px;width:290px;text-align:right;">-50%</div><div class="t" style="top:939.54px;height:20px;line-height:20px;font-size:15px;color:#000;letter-spacing:-0.3px;left:87px;width:260px;text-align:right;">4.7<span style="visibility:hidden">)</span></div><div class="t" style="top:939.54px;height:20px;line-height:20px;font-size:15px;color:#000;letter-spacing:-0.3px;left:149px;width:290px;text-align:right;">-40%</div><div class="t" style="top:389.67px;height:20px;line-height:20px;font-size:14.6px;color:#9c0006;letter-spacing:0px;left:443.5px;text-align:left;"><span style="visibility:hidden">(</span>Lỗ vốn</div><div class="t" style="top:389.67px;height:20px;line-height:20px;font-size:14.6px;color:#9c0006;letter-spacing:0px;left:561.5px;text-align:left;"><span style="visibility:hidden">(</span>Lỗ vốn</div><div class="t" style="top:389.67px;height:20px;line-height:20px;font-size:14.6px;color:#9c0006;letter-spacing:0px;left:679.5px;text-align:left;"><span style="visibility:hidden">(</span>Lỗ vốn</div><div class="t" style="top:389.67px;height:20px;line-height:20px;font-size:14.6px;color:#9c0006;letter-spacing:0px;left:797.5px;text-align:left;"><span style="visibility:hidden">(</span>Lỗ vốn</div><div class="t" style="top:389.67px;height:20px;line-height:20px;font-size:14.6px;color:#9c0006;letter-spacing:0px;left:915.5px;text-align:left;"><span style="visibility:hidden">(</span>Lỗ vốn</div><div class="t" style="top:389.67px;height:20px;line-height:20px;font-size:14.6px;color:#9c0006;letter-spacing:0px;left:1028.5px;text-align:left;"><span style="visibility:hidden">(</span>Lỗ vốn</div><div class="t" style="top:389.67px;height:20px;line-height:20px;font-size:14.6px;color:#9c0006;letter-spacing:0px;left:1162.5px;text-align:left;"><span style="visibility:hidden">(</span>Lỗ vốn</div><div class="t" style="top:389.67px;height:20px;line-height:20px;font-size:14.6px;color:#9c0006;letter-spacing:0px;left:1275.5px;text-align:left;"><span style="visibility:hidden">(</span>Lỗ vốn</div><div class="t" style="top:389.67px;height:20px;line-height:20px;font-size:14.6px;color:#9c0006;letter-spacing:0px;left:1388.5px;text-align:left;"><span style="visibility:hidden">(</span>Lỗ vốn</div><div class="t" style="top:389.67px;height:20px;line-height:20px;font-size:14.6px;color:#9c0006;letter-spacing:0px;left:1501.5px;text-align:left;"><span style="visibility:hidden">(</span>Lỗ vốn</div><div class="t" style="top:389.67px;height:20px;line-height:20px;font-size:14.6px;color:#9c0006;letter-spacing:0px;left:1614.5px;text-align:left;"><span style="visibility:hidden">(</span>Lỗ vốn</div><div class="t" style="top:654.54px;height:20px;line-height:20px;font-size:15px;color:#9c0006;letter-spacing:-0.3px;left:241px;width:316px;text-align:right;">(27,097,321)</div><div class="t" style="top:654.54px;height:20px;line-height:20px;font-size:15px;color:#9c0006;letter-spacing:-0.3px;left:359px;width:316px;text-align:right;">(24,237,994)</div><div class="t" style="top:654.54px;height:20px;line-height:20px;font-size:15px;color:#9c0006;letter-spacing:-0.3px;left:477px;width:316px;text-align:right;">(21,378,667)</div><div class="t" style="top:654.54px;height:20px;line-height:20px;font-size:15px;color:#9c0006;letter-spacing:-0.3px;left:595px;width:316px;text-align:right;">(18,519,341)</div><div class="t" style="top:654.54px;height:20px;line-height:20px;font-size:15px;color:#9c0006;letter-spacing:-0.3px;left:713px;width:311px;text-align:right;">(15,660,014)</div><div class="t" style="top:654.54px;height:20px;line-height:20px;font-size:15px;color:#9c0006;letter-spacing:-0.3px;left:826px;width:332px;text-align:right;">(12,800,687)</div><div class="t" style="top:654.54px;height:20px;line-height:20px;font-size:15px;color:#9c0006;letter-spacing:-0.3px;left:960px;width:311px;text-align:right;">(9,941,360)</div><div class="t" style="top:654.54px;height:20px;line-height:20px;font-size:15px;color:#9c0006;letter-spacing:-0.3px;left:1073px;width:311px;text-align:right;">(7,082,034)</div><div class="t" style="top:654.54px;height:20px;line-height:20px;font-size:15px;color:#9c0006;letter-spacing:-0.3px;left:1186px;width:311px;text-align:right;">(4,222,707)</div><div class="t" style="top:654.54px;height:20px;line-height:20px;font-size:15px;color:#9c0006;letter-spacing:-0.3px;left:1299px;width:311px;text-align:right;">(1,363,380)</div><div class="t" style="top:654.54px;height:20px;line-height:20px;font-size:15px;color:#9c0006;letter-spacing:-0.3px;left:1412px;width:320px;text-align:right;">1,495,947<span style="visibility:hidden">)</span></div><div class="t" style="top:409.67px;height:20px;line-height:20px;font-size:14.6px;color:#9c0006;letter-spacing:0px;left:443.5px;text-align:left;"><span style="visibility:hidden">(</span>Lỗ vốn</div><div class="t" style="top:409.67px;height:20px;line-height:20px;font-size:14.6px;color:#9c0006;letter-spacing:0px;left:561.5px;text-align:left;"><span style="visibility:hidden">(</span>Lỗ vốn</div><div class="t" style="top:409.67px;height:20px;line-height:20px;font-size:14.6px;color:#9c0006;letter-spacing:0px;left:679.5px;text-align:left;"><span style="visibility:hidden">(</span>Lỗ vốn</div><div class="t" style="top:409.67px;height:20px;line-height:20px;font-size:14.6px;color:#9c0006;letter-spacing:0px;left:797.5px;text-align:left;"><span style="visibility:hidden">(</span>Lỗ vốn</div><div class="t" style="top:409.67px;height:20px;line-height:20px;font-size:14.6px;color:#9c0006;letter-spacing:0px;left:915.5px;text-align:left;"><span style="visibility:hidden">(</span>Lỗ vốn</div><div class="t" style="top:409.67px;height:20px;line-height:20px;font-size:14.6px;color:#9c0006;letter-spacing:0px;left:1028.5px;text-align:left;"><span style="visibility:hidden">(</span>Lỗ vốn</div><div class="t" style="top:409.67px;height:20px;line-height:20px;font-size:14.6px;color:#9c0006;letter-spacing:0px;left:1162.5px;text-align:left;"><span style="visibility:hidden">(</span>Lỗ vốn</div><div class="t" style="top:409.67px;height:20px;line-height:20px;font-size:14.6px;color:#9c0006;letter-spacing:0px;left:1275.5px;text-align:left;"><span style="visibility:hidden">(</span>Lỗ vốn</div><div class="t" style="top:409.67px;height:20px;line-height:20px;font-size:14.6px;color:#9c0006;letter-spacing:0px;left:1388.5px;text-align:left;"><span style="visibility:hidden">(</span>Lỗ vốn</div><div class="t" style="top:409.67px;height:20px;line-height:20px;font-size:14.6px;color:#9c0006;letter-spacing:0px;left:1501.5px;text-align:left;"><span style="visibility:hidden">(</span>Lỗ vốn</div><div class="t" style="top:409.54px;height:20px;line-height:20px;font-size:15px;color:#9c0006;letter-spacing:-0.3px;left:1412px;width:320px;text-align:right;">55.3<span style="visibility:hidden">)</span></div><div class="t" style="top:674.54px;height:20px;line-height:20px;font-size:15px;color:#9c0006;letter-spacing:-0.3px;left:241px;width:316px;text-align:right;">(20,071,111)</div><div class="t" style="top:674.54px;height:20px;line-height:20px;font-size:15px;color:#9c0006;letter-spacing:-0.3px;left:359px;width:316px;text-align:right;">(16,639,919)</div><div class="t" style="top:674.54px;height:20px;line-height:20px;font-size:15px;color:#9c0006;letter-spacing:-0.3px;left:477px;width:316px;text-align:right;">(13,208,727)</div><div class="t" style="top:674.54px;height:20px;line-height:20px;font-size:15px;color:#9c0006;letter-spacing:-0.3px;left:595px;width:316px;text-align:right;">(9,777,535)</div><div class="t" style="top:674.54px;height:20px;line-height:20px;font-size:15px;color:#9c0006;letter-spacing:-0.3px;left:713px;width:311px;text-align:right;">(6,346,343)</div><div class="t" style="top:674.54px;height:20px;line-height:20px;font-size:15px;color:#9c0006;letter-spacing:-0.3px;left:826px;width:332px;text-align:right;">(2,915,151)</div><div class="t" style="top:674.54px;height:20px;line-height:20px;font-size:15px;color:#9c0006;letter-spacing:-0.3px;left:960px;width:311px;text-align:right;">516,041<span style="visibility:hidden">)</span></div><div class="t" style="top:674.54px;height:20px;line-height:20px;font-size:15px;color:#9c0006;letter-spacing:-0.3px;left:1073px;width:311px;text-align:right;">3,947,233<span style="visibility:hidden">)</span></div><div class="t" style="top:674.54px;height:20px;line-height:20px;font-size:15px;color:#9c0006;letter-spacing:-0.3px;left:1186px;width:311px;text-align:right;">7,378,425<span style="visibility:hidden">)</span></div><div class="t" style="top:674.54px;height:20px;line-height:20px;font-size:15px;color:#9c0006;letter-spacing:-0.3px;left:1299px;width:311px;text-align:right;">10,809,618<span style="visibility:hidden">)</span></div><div class="t" style="top:674.54px;height:20px;line-height:20px;font-size:15px;color:#9c0006;letter-spacing:-0.3px;left:1412px;width:320px;text-align:right;">14,240,810<span style="visibility:hidden">)</span></div><div class="t" style="top:429.67px;height:20px;line-height:20px;font-size:14.6px;color:#9c0006;letter-spacing:0px;left:443.5px;text-align:left;"><span style="visibility:hidden">(</span>Lỗ vốn</div><div class="t" style="top:429.67px;height:20px;line-height:20px;font-size:14.6px;color:#9c0006;letter-spacing:0px;left:561.5px;text-align:left;"><span style="visibility:hidden">(</span>Lỗ vốn</div><div class="t" style="top:429.67px;height:20px;line-height:20px;font-size:14.6px;color:#9c0006;letter-spacing:0px;left:679.5px;text-align:left;"><span style="visibility:hidden">(</span>Lỗ vốn</div><div class="t" style="top:429.67px;height:20px;line-height:20px;font-size:14.6px;color:#9c0006;letter-spacing:0px;left:797.5px;text-align:left;"><span style="visibility:hidden">(</span>Lỗ vốn</div><div class="t" style="top:429.67px;height:20px;line-height:20px;font-size:14.6px;color:#9c0006;letter-spacing:0px;left:915.5px;text-align:left;"><span style="visibility:hidden">(</span>Lỗ vốn</div><div class="t" style="top:429.67px;height:20px;line-height:20px;font-size:14.6px;color:#9c0006;letter-spacing:0px;left:1028.5px;text-align:left;"><span style="visibility:hidden">(</span>Lỗ vốn</div><div class="t" style="top:429.67px;height:20px;line-height:20px;font-size:14.6px;color:#9c0006;letter-spacing:0px;left:1162.5px;text-align:left;"><span style="visibility:hidden">(</span>Lỗ vốn</div><div class="t" style="top:429.54px;height:20px;line-height:20px;font-size:15px;color:#9c0006;letter-spacing:-0.3px;left:1073px;width:311px;text-align:right;">53.5<span style="visibility:hidden">)</span></div><div class="t" style="top:429.54px;height:20px;line-height:20px;font-size:15px;color:#9c0006;letter-spacing:-0.3px;left:1186px;width:311px;text-align:right;">45.4<span style="visibility:hidden">)</span></div><div class="t" style="top:429.54px;height:20px;line-height:20px;font-size:15px;color:#9c0006;letter-spacing:-0.3px;left:1299px;width:311px;text-align:right;">39.4<span style="visibility:hidden">)</span></div><div class="t" style="top:429.54px;height:20px;line-height:20px;font-size:15px;color:#000;letter-spacing:-0.3px;left:1412px;width:320px;text-align:right;">34.9<span style="visibility:hidden">)</span></div><div class="t" style="top:694.54px;height:20px;line-height:20px;font-size:15px;color:#9c0006;letter-spacing:-0.3px;left:241px;width:316px;text-align:right;">(13,044,902)</div><div class="t" style="top:694.54px;height:20px;line-height:20px;font-size:15px;color:#9c0006;letter-spacing:-0.3px;left:359px;width:316px;text-align:right;">(9,041,844)</div><div class="t" style="top:694.54px;height:20px;line-height:20px;font-size:15px;color:#9c0006;letter-spacing:-0.3px;left:477px;width:316px;text-align:right;">(5,038,787)</div><div class="t" style="top:694.54px;height:20px;line-height:20px;font-size:15px;color:#9c0006;letter-spacing:-0.3px;left:595px;width:316px;text-align:right;">(1,035,730)</div><div class="t" style="top:694.54px;height:20px;line-height:20px;font-size:15px;color:#9c0006;letter-spacing:-0.3px;left:713px;width:311px;text-align:right;">2,967,328<span style="visibility:hidden">)</span></div><div class="t" style="top:694.54px;height:20px;line-height:20px;font-size:15px;color:#9c0006;letter-spacing:-0.3px;left:826px;width:332px;text-align:right;">6,970,385<span style="visibility:hidden">)</span></div><div class="t" style="top:694.54px;height:20px;line-height:20px;font-size:15px;color:#9c0006;letter-spacing:-0.3px;left:960px;width:311px;text-align:right;">10,973,443<span style="visibility:hidden">)</span></div><div class="t" style="top:694.54px;height:20px;line-height:20px;font-size:15px;color:#9c0006;letter-spacing:-0.3px;left:1073px;width:311px;text-align:right;">14,976,500<span style="visibility:hidden">)</span></div><div class="t" style="top:694.54px;height:20px;line-height:20px;font-size:15px;color:#9c0006;letter-spacing:-0.3px;left:1186px;width:311px;text-align:right;">18,979,558<span style="visibility:hidden">)</span></div><div class="t" style="top:694.54px;height:20px;line-height:20px;font-size:15px;color:#000;letter-spacing:-0.3px;left:1299px;width:311px;text-align:right;">22,982,615<span style="visibility:hidden">)</span></div><div class="t" style="top:694.54px;height:20px;line-height:20px;font-size:15px;color:#000;letter-spacing:-0.3px;left:1412px;width:320px;text-align:right;">26,985,673<span style="visibility:hidden">)</span></div><div class="t" style="top:449.67px;height:20px;line-height:20px;font-size:14.6px;color:#9c0006;letter-spacing:0px;left:443.5px;text-align:left;"><span style="visibility:hidden">(</span>Lỗ vốn</div><div class="t" style="top:449.67px;height:20px;line-height:20px;font-size:14.6px;color:#9c0006;letter-spacing:0px;left:561.5px;text-align:left;"><span style="visibility:hidden">(</span>Lỗ vốn</div><div class="t" style="top:449.67px;height:20px;line-height:20px;font-size:14.6px;color:#9c0006;letter-spacing:0px;left:679.5px;text-align:left;"><span style="visibility:hidden">(</span>Lỗ vốn</div><div class="t" style="top:449.67px;height:20px;line-height:20px;font-size:14.6px;color:#9c0006;letter-spacing:0px;left:797.5px;text-align:left;"><span style="visibility:hidden">(</span>Lỗ vốn</div><div class="t" style="top:449.67px;height:20px;line-height:20px;font-size:14.6px;color:#9c0006;letter-spacing:0px;left:915.5px;text-align:left;"><span style="visibility:hidden">(</span>Lỗ vốn</div><div class="t" style="top:449.54px;height:20px;line-height:20px;font-size:15px;color:#9c0006;letter-spacing:-0.3px;left:826px;width:332px;text-align:right;">49.4<span style="visibility:hidden">)</span></div><div class="t" style="top:449.54px;height:20px;line-height:20px;font-size:15px;color:#9c0006;letter-spacing:-0.3px;left:960px;width:311px;text-align:right;">41.5<span style="visibility:hidden">)</span></div><div class="t" style="top:449.54px;height:20px;line-height:20px;font-size:15px;color:#000;letter-spacing:-0.3px;left:1073px;width:311px;text-align:right;">36.0<span style="visibility:hidden">)</span></div><div class="t" style="top:449.54px;height:20px;line-height:20px;font-size:15px;color:#000;letter-spacing:-0.3px;left:1186px;width:311px;text-align:right;">31.7<span style="visibility:hidden">)</span></div><div class="t" style="top:449.54px;height:20px;line-height:20px;font-size:15px;color:#000;letter-spacing:-0.3px;left:1299px;width:311px;text-align:right;">28.4<span style="visibility:hidden">)</span></div><div class="t" style="top:449.54px;height:20px;line-height:20px;font-size:15px;color:#000;letter-spacing:-0.3px;left:1412px;width:320px;text-align:right;">25.9<span style="visibility:hidden">)</span></div><div class="t" style="top:714.54px;height:20px;line-height:20px;font-size:15px;color:#9c0006;letter-spacing:-0.3px;left:241px;width:316px;text-align:right;">(6,018,692)</div><div class="t" style="top:714.54px;height:20px;line-height:20px;font-size:15px;color:#9c0006;letter-spacing:-0.3px;left:359px;width:316px;text-align:right;">(1,443,770)</div><div class="t" style="top:714.54px;height:20px;line-height:20px;font-size:15px;color:#9c0006;letter-spacing:-0.3px;left:477px;width:316px;text-align:right;">3,131,153<span style="visibility:hidden">)</span></div><div class="t" style="top:714.54px;height:20px;line-height:20px;font-size:15px;color:#9c0006;letter-spacing:-0.3px;left:595px;width:316px;text-align:right;">7,706,076<span style="visibility:hidden">)</span></div><div class="t" style="top:714.54px;height:20px;line-height:20px;font-size:15px;color:#9c0006;letter-spacing:-0.3px;left:713px;width:311px;text-align:right;">12,280,999<span style="visibility:hidden">)</span></div><div class="t" style="top:714.54px;height:20px;line-height:20px;font-size:15px;color:#9c0006;letter-spacing:-0.3px;left:826px;width:332px;text-align:right;">16,855,922<span style="visibility:hidden">)</span></div><div class="t" style="top:714.54px;height:20px;line-height:20px;font-size:15px;color:#000;letter-spacing:-0.3px;left:960px;width:311px;text-align:right;">21,430,844<span style="visibility:hidden">)</span></div><div class="t" style="top:714.54px;height:20px;line-height:20px;font-size:15px;color:#000;letter-spacing:-0.3px;left:1073px;width:311px;text-align:right;">26,005,767<span style="visibility:hidden">)</span></div><div class="t" style="top:714.54px;height:20px;line-height:20px;font-size:15px;color:#000;letter-spacing:-0.3px;left:1186px;width:311px;text-align:right;">30,580,690<span style="visibility:hidden">)</span></div><div class="t" style="top:714.54px;height:20px;line-height:20px;font-size:15px;color:#000;letter-spacing:-0.3px;left:1299px;width:311px;text-align:right;">35,155,613<span style="visibility:hidden">)</span></div><div class="t" style="top:714.54px;height:20px;line-height:20px;font-size:15px;color:#000;letter-spacing:-0.3px;left:1412px;width:320px;text-align:right;">39,730,536<span style="visibility:hidden">)</span></div><div class="t" style="top:469.67px;height:20px;line-height:20px;font-size:14.6px;color:#9c0006;letter-spacing:0px;left:443.5px;text-align:left;"><span style="visibility:hidden">(</span>Lỗ vốn</div><div class="t" style="top:469.67px;height:20px;line-height:20px;font-size:14.6px;color:#9c0006;letter-spacing:0px;left:561.5px;text-align:left;"><span style="visibility:hidden">(</span>Lỗ vốn</div><div class="t" style="top:469.67px;height:20px;line-height:20px;font-size:14.6px;color:#9c0006;letter-spacing:0px;left:679.5px;text-align:left;"><span style="visibility:hidden">(</span>Lỗ vốn</div><div class="t" style="top:469.54px;height:20px;line-height:20px;font-size:15px;color:#9c0006;letter-spacing:-0.3px;left:595px;width:316px;text-align:right;">50.2<span style="visibility:hidden">)</span></div><div class="t" style="top:469.54px;height:20px;line-height:20px;font-size:15px;color:#9c0006;letter-spacing:-0.3px;left:713px;width:311px;text-align:right;">41.2<span style="visibility:hidden">)</span></div><div class="t" style="top:469.54px;height:20px;line-height:20px;font-size:15px;color:#000;letter-spacing:-0.3px;left:826px;width:332px;text-align:right;">35.2<span style="visibility:hidden">)</span></div><div class="t" style="top:469.54px;height:20px;line-height:20px;font-size:15px;color:#000;letter-spacing:-0.3px;left:960px;width:311px;text-align:right;">30.7<span style="visibility:hidden">)</span></div><div class="t" style="top:469.54px;height:20px;line-height:20px;font-size:15px;color:#000;letter-spacing:-0.3px;left:1073px;width:311px;text-align:right;">27.3<span style="visibility:hidden">)</span></div><div class="t" style="top:469.54px;height:20px;line-height:20px;font-size:15px;color:#000;letter-spacing:-0.3px;left:1186px;width:311px;text-align:right;">24.8<span style="visibility:hidden">)</span></div><div class="t" style="top:469.54px;height:20px;line-height:20px;font-size:15px;color:#000;letter-spacing:-0.3px;left:1299px;width:311px;text-align:right;">22.7<span style="visibility:hidden">)</span></div><div class="t" style="top:469.54px;height:20px;line-height:20px;font-size:15px;color:#000;letter-spacing:-0.3px;left:1412px;width:320px;text-align:right;">20.9<span style="visibility:hidden">)</span></div><div class="t" style="top:734.54px;height:20px;line-height:20px;font-size:15px;color:#9c0006;letter-spacing:-0.3px;left:241px;width:316px;text-align:right;">1,007,517<span style="visibility:hidden">)</span></div><div class="t" style="top:734.54px;height:20px;line-height:20px;font-size:15px;color:#9c0006;letter-spacing:-0.3px;left:359px;width:316px;text-align:right;">6,154,305<span style="visibility:hidden">)</span></div><div class="t" style="top:734.54px;height:20px;line-height:20px;font-size:15px;color:#9c0006;letter-spacing:-0.3px;left:477px;width:316px;text-align:right;">11,301,093<span style="visibility:hidden">)</span></div><div class="t" style="top:734.54px;height:20px;line-height:20px;font-size:15px;color:#9c0006;letter-spacing:-0.3px;left:595px;width:316px;text-align:right;">16,447,882<span style="visibility:hidden">)</span></div><div class="t" style="top:734.54px;height:20px;line-height:20px;font-size:15px;color:#000;letter-spacing:-0.3px;left:713px;width:311px;text-align:right;">21,594,670<span style="visibility:hidden">)</span></div><div class="t" style="top:734.54px;height:20px;line-height:20px;font-size:15px;color:#000;letter-spacing:-0.3px;left:826px;width:332px;text-align:right;">26,741,458<span style="visibility:hidden">)</span></div><div class="t" style="top:734.54px;height:20px;line-height:20px;font-size:15px;color:#000;letter-spacing:-0.3px;left:960px;width:311px;text-align:right;">31,888,246<span style="visibility:hidden">)</span></div><div class="t" style="top:734.54px;height:20px;line-height:20px;font-size:15px;color:#000;letter-spacing:-0.3px;left:1073px;width:311px;text-align:right;">37,035,034<span style="visibility:hidden">)</span></div><div class="t" style="top:734.54px;height:20px;line-height:20px;font-size:15px;color:#000;letter-spacing:-0.3px;left:1186px;width:311px;text-align:right;">42,181,822<span style="visibility:hidden">)</span></div><div class="t" style="top:734.54px;height:20px;line-height:20px;font-size:15px;color:#000;letter-spacing:-0.3px;left:1299px;width:311px;text-align:right;">47,328,610<span style="visibility:hidden">)</span></div><div class="t" style="top:734.54px;height:20px;line-height:20px;font-size:15px;color:#000;letter-spacing:-0.3px;left:1412px;width:320px;text-align:right;">52,475,399<span style="visibility:hidden">)</span></div><div class="t" style="top:493.17px;height:20px;line-height:20px;font-size:14.6px;color:#9c0006;letter-spacing:0px;left:443.5px;text-align:left;"><span style="visibility:hidden">(</span>Lỗ vốn</div><div class="t" style="top:493.04px;height:20px;line-height:20px;font-size:15px;color:#9c0006;letter-spacing:-0.3px;left:359px;width:316px;text-align:right;">56.6<span style="visibility:hidden">)</span></div><div class="t" style="top:493.04px;height:20px;line-height:20px;font-size:15px;color:#9c0006;letter-spacing:-0.3px;left:477px;width:316px;text-align:right;">44.5<span style="visibility:hidden">)</span></div><div class="t" style="top:493.04px;height:20px;line-height:20px;font-size:15px;color:#9c0006;letter-spacing:-0.3px;left:595px;width:316px;text-align:right;">36.8<span style="visibility:hidden">)</span></div><div class="t" style="top:493.04px;height:20px;line-height:20px;font-size:15px;color:#000;letter-spacing:-0.3px;left:713px;width:311px;text-align:right;">31.4<span style="visibility:hidden">)</span></div><div class="t" style="top:491.39px;height:20px;line-height:20px;font-size:20px;color:#4472c4;letter-spacing:0px;font-weight:bold;left:826px;width:332px;text-align:right;">27.6<span style="visibility:hidden">)</span></div><div class="t" style="top:493.04px;height:20px;line-height:20px;font-size:15px;color:#000;letter-spacing:-0.3px;left:960px;width:311px;text-align:right;">24.7<span style="visibility:hidden">)</span></div><div class="t" style="top:493.04px;height:20px;line-height:20px;font-size:15px;color:#000;letter-spacing:-0.3px;left:1073px;width:311px;text-align:right;">22.4<span style="visibility:hidden">)</span></div><div class="t" style="top:493.04px;height:20px;line-height:20px;font-size:15px;color:#000;letter-spacing:-0.3px;left:1186px;width:311px;text-align:right;">20.5<span style="visibility:hidden">)</span></div><div class="t" style="top:493.04px;height:20px;line-height:20px;font-size:15px;color:#000;letter-spacing:-0.3px;left:1299px;width:311px;text-align:right;">19.0<span style="visibility:hidden">)</span></div><div class="t" style="top:493.04px;height:20px;line-height:20px;font-size:15px;color:#000;letter-spacing:-0.3px;left:1412px;width:320px;text-align:right;">17.8<span style="visibility:hidden">)</span></div><div class="t" style="top:758.04px;height:20px;line-height:20px;font-size:15px;color:#9c0006;letter-spacing:-0.3px;left:241px;width:316px;text-align:right;">8,033,727<span style="visibility:hidden">)</span></div><div class="t" style="top:758.04px;height:20px;line-height:20px;font-size:15px;color:#9c0006;letter-spacing:-0.3px;left:359px;width:316px;text-align:right;">13,752,380<span style="visibility:hidden">)</span></div><div class="t" style="top:758.04px;height:20px;line-height:20px;font-size:15px;color:#9c0006;letter-spacing:-0.3px;left:477px;width:316px;text-align:right;">19,471,034<span style="visibility:hidden">)</span></div><div class="t" style="top:758.04px;height:20px;line-height:20px;font-size:15px;color:#000;letter-spacing:-0.3px;left:595px;width:316px;text-align:right;">25,189,687<span style="visibility:hidden">)</span></div><div class="t" style="top:758.04px;height:20px;line-height:20px;font-size:15px;color:#000;letter-spacing:-0.3px;left:713px;width:311px;text-align:right;">30,908,341<span style="visibility:hidden">)</span></div><div class="t" style="top:756.39px;height:20px;line-height:20px;font-size:20px;color:#4472c4;letter-spacing:0px;font-weight:bold;left:826px;width:332px;text-align:right;">36,626,994<span style="visibility:hidden">)</span></div><div class="t" style="top:758.04px;height:20px;line-height:20px;font-size:15px;color:#000;letter-spacing:-0.3px;left:960px;width:311px;text-align:right;">42,345,648<span style="visibility:hidden">)</span></div><div class="t" style="top:758.04px;height:20px;line-height:20px;font-size:15px;color:#000;letter-spacing:-0.3px;left:1073px;width:311px;text-align:right;">48,064,301<span style="visibility:hidden">)</span></div><div class="t" style="top:758.04px;height:20px;line-height:20px;font-size:15px;color:#000;letter-spacing:-0.3px;left:1186px;width:311px;text-align:right;">53,782,955<span style="visibility:hidden">)</span></div><div class="t" style="top:758.04px;height:20px;line-height:20px;font-size:15px;color:#000;letter-spacing:-0.3px;left:1299px;width:311px;text-align:right;">59,501,608<span style="visibility:hidden">)</span></div><div class="t" style="top:758.04px;height:20px;line-height:20px;font-size:15px;color:#000;letter-spacing:-0.3px;left:1412px;width:320px;text-align:right;">65,220,262<span style="visibility:hidden">)</span></div><div class="t" style="top:514.54px;height:20px;line-height:20px;font-size:15px;color:#9c0006;letter-spacing:-0.3px;left:241px;width:316px;text-align:right;">53.3<span style="visibility:hidden">)</span></div><div class="t" style="top:514.54px;height:20px;line-height:20px;font-size:15px;color:#9c0006;letter-spacing:-0.3px;left:359px;width:316px;text-align:right;">41.6<span style="visibility:hidden">)</span></div><div class="t" style="top:514.54px;height:20px;line-height:20px;font-size:15px;color:#000;letter-spacing:-0.3px;left:477px;width:316px;text-align:right;">34.3<span style="visibility:hidden">)</span></div><div class="t" style="top:514.54px;height:20px;line-height:20px;font-size:15px;color:#000;letter-spacing:-0.3px;left:595px;width:316px;text-align:right;">29.2<span style="visibility:hidden">)</span></div><div class="t" style="top:514.54px;height:20px;line-height:20px;font-size:15px;color:#000;letter-spacing:-0.3px;left:713px;width:311px;text-align:right;">25.7<span style="visibility:hidden">)</span></div><div class="t" style="top:514.54px;height:20px;line-height:20px;font-size:15px;color:#000;letter-spacing:-0.3px;left:826px;width:332px;text-align:right;">23.0<span style="visibility:hidden">)</span></div><div class="t" style="top:514.54px;height:20px;line-height:20px;font-size:15px;color:#000;letter-spacing:-0.3px;left:960px;width:311px;text-align:right;">20.8<span style="visibility:hidden">)</span></div><div class="t" style="top:514.54px;height:20px;line-height:20px;font-size:15px;color:#000;letter-spacing:-0.3px;left:1073px;width:311px;text-align:right;">19.1<span style="visibility:hidden">)</span></div><div class="t" style="top:514.54px;height:20px;line-height:20px;font-size:15px;color:#000;letter-spacing:-0.3px;left:1186px;width:311px;text-align:right;">17.7<span style="visibility:hidden">)</span></div><div class="t" style="top:514.54px;height:20px;line-height:20px;font-size:15px;color:#000;letter-spacing:-0.3px;left:1299px;width:311px;text-align:right;">16.6<span style="visibility:hidden">)</span></div><div class="t" style="top:514.54px;height:20px;line-height:20px;font-size:15px;color:#000;letter-spacing:-0.3px;left:1412px;width:320px;text-align:right;">15.6<span style="visibility:hidden">)</span></div><div class="t" style="top:779.54px;height:20px;line-height:20px;font-size:15px;color:#9c0006;letter-spacing:-0.3px;left:241px;width:316px;text-align:right;">15,059,936<span style="visibility:hidden">)</span></div><div class="t" style="top:779.54px;height:20px;line-height:20px;font-size:15px;color:#000;letter-spacing:-0.3px;left:359px;width:316px;text-align:right;">21,350,455<span style="visibility:hidden">)</span></div><div class="t" style="top:779.54px;height:20px;line-height:20px;font-size:15px;color:#000;letter-spacing:-0.3px;left:477px;width:316px;text-align:right;">27,640,974<span style="visibility:hidden">)</span></div><div class="t" style="top:779.54px;height:20px;line-height:20px;font-size:15px;color:#000;letter-spacing:-0.3px;left:595px;width:316px;text-align:right;">33,931,493<span style="visibility:hidden">)</span></div><div class="t" style="top:779.54px;height:20px;line-height:20px;font-size:15px;color:#000;letter-spacing:-0.3px;left:713px;width:311px;text-align:right;">40,222,011<span style="visibility:hidden">)</span></div><div class="t" style="top:779.54px;height:20px;line-height:20px;font-size:15px;color:#000;letter-spacing:-0.3px;left:826px;width:332px;text-align:right;">46,512,530<span style="visibility:hidden">)</span></div><div class="t" style="top:779.54px;height:20px;line-height:20px;font-size:15px;color:#000;letter-spacing:-0.3px;left:960px;width:311px;text-align:right;">52,803,049<span style="visibility:hidden">)</span></div><div class="t" style="top:779.54px;height:20px;line-height:20px;font-size:15px;color:#000;letter-spacing:-0.3px;left:1073px;width:311px;text-align:right;">59,093,568<span style="visibility:hidden">)</span></div><div class="t" style="top:779.54px;height:20px;line-height:20px;font-size:15px;color:#000;letter-spacing:-0.3px;left:1186px;width:311px;text-align:right;">65,384,087<span style="visibility:hidden">)</span></div><div class="t" style="top:779.54px;height:20px;line-height:20px;font-size:15px;color:#000;letter-spacing:-0.3px;left:1299px;width:311px;text-align:right;">71,674,606<span style="visibility:hidden">)</span></div><div class="t" style="top:779.54px;height:20px;line-height:20px;font-size:15px;color:#000;letter-spacing:-0.3px;left:1412px;width:320px;text-align:right;">77,965,125<span style="visibility:hidden">)</span></div><div class="t" style="top:534.54px;height:20px;line-height:20px;font-size:15px;color:#9c0006;letter-spacing:-0.3px;left:241px;width:316px;text-align:right;">40.6<span style="visibility:hidden">)</span></div><div class="t" style="top:534.54px;height:20px;line-height:20px;font-size:15px;color:#000;letter-spacing:-0.3px;left:359px;width:316px;text-align:right;">33.1<span style="visibility:hidden">)</span></div><div class="t" style="top:534.54px;height:20px;line-height:20px;font-size:15px;color:#000;letter-spacing:-0.3px;left:477px;width:316px;text-align:right;">28.0<span style="visibility:hidden">)</span></div><div class="t" style="top:534.54px;height:20px;line-height:20px;font-size:15px;color:#000;letter-spacing:-0.3px;left:595px;width:316px;text-align:right;">24.5<span style="visibility:hidden">)</span></div><div class="t" style="top:534.54px;height:20px;line-height:20px;font-size:15px;color:#000;letter-spacing:-0.3px;left:713px;width:311px;text-align:right;">21.9<span style="visibility:hidden">)</span></div><div class="t" style="top:534.54px;height:20px;line-height:20px;font-size:15px;color:#000;letter-spacing:-0.3px;left:826px;width:332px;text-align:right;">19.8<span style="visibility:hidden">)</span></div><div class="t" style="top:534.54px;height:20px;line-height:20px;font-size:15px;color:#000;letter-spacing:-0.3px;left:960px;width:311px;text-align:right;">18.2<span style="visibility:hidden">)</span></div><div class="t" style="top:534.54px;height:20px;line-height:20px;font-size:15px;color:#000;letter-spacing:-0.3px;left:1073px;width:311px;text-align:right;">16.8<span style="visibility:hidden">)</span></div><div class="t" style="top:534.54px;height:20px;line-height:20px;font-size:15px;color:#000;letter-spacing:-0.3px;left:1186px;width:311px;text-align:right;">15.7<span style="visibility:hidden">)</span></div><div class="t" style="top:534.54px;height:20px;line-height:20px;font-size:15px;color:#000;letter-spacing:-0.3px;left:1299px;width:311px;text-align:right;">14.8<span style="visibility:hidden">)</span></div><div class="t" style="top:534.54px;height:20px;line-height:20px;font-size:15px;color:#000;letter-spacing:-0.3px;left:1412px;width:320px;text-align:right;">14.1<span style="visibility:hidden">)</span></div><div class="t" style="top:799.54px;height:20px;line-height:20px;font-size:15px;color:#000;letter-spacing:-0.3px;left:241px;width:316px;text-align:right;">22,086,146<span style="visibility:hidden">)</span></div><div class="t" style="top:799.54px;height:20px;line-height:20px;font-size:15px;color:#000;letter-spacing:-0.3px;left:359px;width:316px;text-align:right;">28,948,530<span style="visibility:hidden">)</span></div><div class="t" style="top:799.54px;height:20px;line-height:20px;font-size:15px;color:#000;letter-spacing:-0.3px;left:477px;width:316px;text-align:right;">35,810,914<span style="visibility:hidden">)</span></div><div class="t" style="top:799.54px;height:20px;line-height:20px;font-size:15px;color:#000;letter-spacing:-0.3px;left:595px;width:316px;text-align:right;">42,673,298<span style="visibility:hidden">)</span></div><div class="t" style="top:799.54px;height:20px;line-height:20px;font-size:15px;color:#000;letter-spacing:-0.3px;left:713px;width:311px;text-align:right;">49,535,682<span style="visibility:hidden">)</span></div><div class="t" style="top:799.54px;height:20px;line-height:20px;font-size:15px;color:#000;letter-spacing:-0.3px;left:826px;width:332px;text-align:right;">56,398,067<span style="visibility:hidden">)</span></div><div class="t" style="top:799.54px;height:20px;line-height:20px;font-size:15px;color:#000;letter-spacing:-0.3px;left:960px;width:311px;text-align:right;">63,260,451<span style="visibility:hidden">)</span></div><div class="t" style="top:799.54px;height:20px;line-height:20px;font-size:15px;color:#000;letter-spacing:-0.3px;left:1073px;width:311px;text-align:right;">70,122,835<span style="visibility:hidden">)</span></div><div class="t" style="top:799.54px;height:20px;line-height:20px;font-size:15px;color:#000;letter-spacing:-0.3px;left:1186px;width:311px;text-align:right;">76,985,219<span style="visibility:hidden">)</span></div><div class="t" style="top:799.54px;height:20px;line-height:20px;font-size:15px;color:#000;letter-spacing:-0.3px;left:1299px;width:311px;text-align:right;">83,847,603<span style="visibility:hidden">)</span></div><div class="t" style="top:799.54px;height:20px;line-height:20px;font-size:15px;color:#000;letter-spacing:-0.3px;left:1412px;width:320px;text-align:right;">90,709,988<span style="visibility:hidden">)</span></div><div class="t" style="top:554.54px;height:20px;line-height:20px;font-size:15px;color:#000;letter-spacing:-0.3px;left:241px;width:316px;text-align:right;">32.9<span style="visibility:hidden">)</span></div><div class="t" style="top:554.54px;height:20px;line-height:20px;font-size:15px;color:#000;letter-spacing:-0.3px;left:359px;width:316px;text-align:right;">27.6<span style="visibility:hidden">)</span></div><div class="t" style="top:554.54px;height:20px;line-height:20px;font-size:15px;color:#000;letter-spacing:-0.3px;left:477px;width:316px;text-align:right;">24.0<span style="visibility:hidden">)</span></div><div class="t" style="top:554.54px;height:20px;line-height:20px;font-size:15px;color:#000;letter-spacing:-0.3px;left:595px;width:316px;text-align:right;">21.2<span style="visibility:hidden">)</span></div><div class="t" style="top:554.54px;height:20px;line-height:20px;font-size:15px;color:#000;letter-spacing:-0.3px;left:713px;width:311px;text-align:right;">19.2<span style="visibility:hidden">)</span></div><div class="t" style="top:554.54px;height:20px;line-height:20px;font-size:15px;color:#000;letter-spacing:-0.3px;left:826px;width:332px;text-align:right;">17.5<span style="visibility:hidden">)</span></div><div class="t" style="top:554.54px;height:20px;line-height:20px;font-size:15px;color:#000;letter-spacing:-0.3px;left:960px;width:311px;text-align:right;">16.2<span style="visibility:hidden">)</span></div><div class="t" style="top:554.54px;height:20px;line-height:20px;font-size:15px;color:#000;letter-spacing:-0.3px;left:1073px;width:311px;text-align:right;">15.2<span style="visibility:hidden">)</span></div><div class="t" style="top:554.54px;height:20px;line-height:20px;font-size:15px;color:#000;letter-spacing:-0.3px;left:1186px;width:311px;text-align:right;">14.3<span style="visibility:hidden">)</span></div><div class="t" style="top:554.54px;height:20px;line-height:20px;font-size:15px;color:#000;letter-spacing:-0.3px;left:1299px;width:311px;text-align:right;">13.5<span style="visibility:hidden">)</span></div><div class="t" style="top:554.54px;height:20px;line-height:20px;font-size:15px;color:#000;letter-spacing:-0.3px;left:1412px;width:320px;text-align:right;">12.9<span style="visibility:hidden">)</span></div><div class="t" style="top:819.54px;height:20px;line-height:20px;font-size:15px;color:#000;letter-spacing:-0.3px;left:241px;width:316px;text-align:right;">29,112,355<span style="visibility:hidden">)</span></div><div class="t" style="top:819.54px;height:20px;line-height:20px;font-size:15px;color:#000;letter-spacing:-0.3px;left:359px;width:316px;text-align:right;">36,546,605<span style="visibility:hidden">)</span></div><div class="t" style="top:819.54px;height:20px;line-height:20px;font-size:15px;color:#000;letter-spacing:-0.3px;left:477px;width:316px;text-align:right;">43,980,854<span style="visibility:hidden">)</span></div><div class="t" style="top:819.54px;height:20px;line-height:20px;font-size:15px;color:#000;letter-spacing:-0.3px;left:595px;width:316px;text-align:right;">51,415,104<span style="visibility:hidden">)</span></div><div class="t" style="top:819.54px;height:20px;line-height:20px;font-size:15px;color:#000;letter-spacing:-0.3px;left:713px;width:311px;text-align:right;">58,849,353<span style="visibility:hidden">)</span></div><div class="t" style="top:819.54px;height:20px;line-height:20px;font-size:15px;color:#000;letter-spacing:-0.3px;left:826px;width:332px;text-align:right;">66,283,603<span style="visibility:hidden">)</span></div><div class="t" style="top:819.54px;height:20px;line-height:20px;font-size:15px;color:#000;letter-spacing:-0.3px;left:960px;width:311px;text-align:right;">73,717,852<span style="visibility:hidden">)</span></div><div class="t" style="top:819.54px;height:20px;line-height:20px;font-size:15px;color:#000;letter-spacing:-0.3px;left:1073px;width:311px;text-align:right;">81,152,102<span style="visibility:hidden">)</span></div><div class="t" style="top:819.54px;height:20px;line-height:20px;font-size:15px;color:#000;letter-spacing:-0.3px;left:1186px;width:311px;text-align:right;">88,586,351<span style="visibility:hidden">)</span></div><div class="t" style="top:819.54px;height:20px;line-height:20px;font-size:15px;color:#000;letter-spacing:-0.3px;left:1299px;width:311px;text-align:right;">96,020,601<span style="visibility:hidden">)</span></div><div class="t" style="top:819.54px;height:20px;line-height:20px;font-size:15px;color:#000;letter-spacing:-0.3px;left:1412px;width:320px;text-align:right;">103,454,851<span style="visibility:hidden">)</span></div><div class="t" style="top:574.54px;height:20px;line-height:20px;font-size:15px;color:#000;letter-spacing:-0.3px;left:241px;width:316px;text-align:right;">27.8<span style="visibility:hidden">)</span></div><div class="t" style="top:574.54px;height:20px;line-height:20px;font-size:15px;color:#000;letter-spacing:-0.3px;left:359px;width:316px;text-align:right;">23.9<span style="visibility:hidden">)</span></div><div class="t" style="top:574.54px;height:20px;line-height:20px;font-size:15px;color:#000;letter-spacing:-0.3px;left:477px;width:316px;text-align:right;">21.0<span style="visibility:hidden">)</span></div><div class="t" style="top:574.54px;height:20px;line-height:20px;font-size:15px;color:#000;letter-spacing:-0.3px;left:595px;width:316px;text-align:right;">18.8<span style="visibility:hidden">)</span></div><div class="t" style="top:574.54px;height:20px;line-height:20px;font-size:15px;color:#000;letter-spacing:-0.3px;left:713px;width:311px;text-align:right;">17.2<span style="visibility:hidden">)</span></div><div class="t" style="top:574.54px;height:20px;line-height:20px;font-size:15px;color:#000;letter-spacing:-0.3px;left:826px;width:332px;text-align:right;">15.9<span style="visibility:hidden">)</span></div><div class="t" style="top:574.54px;height:20px;line-height:20px;font-size:15px;color:#000;letter-spacing:-0.3px;left:960px;width:311px;text-align:right;">14.8<span style="visibility:hidden">)</span></div><div class="t" style="top:574.54px;height:20px;line-height:20px;font-size:15px;color:#000;letter-spacing:-0.3px;left:1073px;width:311px;text-align:right;">13.9<span style="visibility:hidden">)</span></div><div class="t" style="top:574.54px;height:20px;line-height:20px;font-size:15px;color:#000;letter-spacing:-0.3px;left:1186px;width:311px;text-align:right;">13.2<span style="visibility:hidden">)</span></div><div class="t" style="top:574.54px;height:20px;line-height:20px;font-size:15px;color:#000;letter-spacing:-0.3px;left:1299px;width:311px;text-align:right;">12.5<span style="visibility:hidden">)</span></div><div class="t" style="top:574.54px;height:20px;line-height:20px;font-size:15px;color:#000;letter-spacing:-0.3px;left:1412px;width:320px;text-align:right;">12.0<span style="visibility:hidden">)</span></div><div class="t" style="top:839.54px;height:20px;line-height:20px;font-size:15px;color:#000;letter-spacing:-0.3px;left:241px;width:316px;text-align:right;">36,138,564<span style="visibility:hidden">)</span></div><div class="t" style="top:839.54px;height:20px;line-height:20px;font-size:15px;color:#000;letter-spacing:-0.3px;left:359px;width:316px;text-align:right;">44,144,679<span style="visibility:hidden">)</span></div><div class="t" style="top:839.54px;height:20px;line-height:20px;font-size:15px;color:#000;letter-spacing:-0.3px;left:477px;width:316px;text-align:right;">52,150,794<span style="visibility:hidden">)</span></div><div class="t" style="top:839.54px;height:20px;line-height:20px;font-size:15px;color:#000;letter-spacing:-0.3px;left:595px;width:316px;text-align:right;">60,156,909<span style="visibility:hidden">)</span></div><div class="t" style="top:839.54px;height:20px;line-height:20px;font-size:15px;color:#000;letter-spacing:-0.3px;left:713px;width:311px;text-align:right;">68,163,024<span style="visibility:hidden">)</span></div><div class="t" style="top:839.54px;height:20px;line-height:20px;font-size:15px;color:#000;letter-spacing:-0.3px;left:826px;width:332px;text-align:right;">76,169,139<span style="visibility:hidden">)</span></div><div class="t" style="top:839.54px;height:20px;line-height:20px;font-size:15px;color:#000;letter-spacing:-0.3px;left:960px;width:311px;text-align:right;">84,175,254<span style="visibility:hidden">)</span></div><div class="t" style="top:839.54px;height:20px;line-height:20px;font-size:15px;color:#000;letter-spacing:-0.3px;left:1073px;width:311px;text-align:right;">92,181,369<span style="visibility:hidden">)</span></div><div class="t" style="top:839.54px;height:20px;line-height:20px;font-size:15px;color:#000;letter-spacing:-0.3px;left:1186px;width:311px;text-align:right;">100,187,484<span style="visibility:hidden">)</span></div><div class="t" style="top:839.54px;height:20px;line-height:20px;font-size:15px;color:#000;letter-spacing:-0.3px;left:1299px;width:311px;text-align:right;">108,193,599<span style="visibility:hidden">)</span></div><div class="t" style="top:839.54px;height:20px;line-height:20px;font-size:15px;color:#000;letter-spacing:-0.3px;left:1412px;width:320px;text-align:right;">116,199,714<span style="visibility:hidden">)</span></div><div class="t" style="top:594.54px;height:20px;line-height:20px;font-size:15px;color:#000;letter-spacing:-0.3px;left:241px;width:316px;text-align:right;">24.3<span style="visibility:hidden">)</span></div><div class="t" style="top:594.54px;height:20px;line-height:20px;font-size:15px;color:#000;letter-spacing:-0.3px;left:359px;width:316px;text-align:right;">21.1<span style="visibility:hidden">)</span></div><div class="t" style="top:594.54px;height:20px;line-height:20px;font-size:15px;color:#000;letter-spacing:-0.3px;left:477px;width:316px;text-align:right;">18.8<span style="visibility:hidden">)</span></div><div class="t" style="top:594.54px;height:20px;line-height:20px;font-size:15px;color:#000;letter-spacing:-0.3px;left:595px;width:316px;text-align:right;">17.1<span style="visibility:hidden">)</span></div><div class="t" style="top:594.54px;height:20px;line-height:20px;font-size:15px;color:#000;letter-spacing:-0.3px;left:713px;width:311px;text-align:right;">15.7<span style="visibility:hidden">)</span></div><div class="t" style="top:594.54px;height:20px;line-height:20px;font-size:15px;color:#000;letter-spacing:-0.3px;left:826px;width:332px;text-align:right;">14.6<span style="visibility:hidden">)</span></div><div class="t" style="top:594.54px;height:20px;line-height:20px;font-size:15px;color:#000;letter-spacing:-0.3px;left:960px;width:311px;text-align:right;">13.7<span style="visibility:hidden">)</span></div><div class="t" style="top:594.54px;height:20px;line-height:20px;font-size:15px;color:#000;letter-spacing:-0.3px;left:1073px;width:311px;text-align:right;">12.9<span style="visibility:hidden">)</span></div><div class="t" style="top:594.54px;height:20px;line-height:20px;font-size:15px;color:#000;letter-spacing:-0.3px;left:1186px;width:311px;text-align:right;">12.3<span style="visibility:hidden">)</span></div><div class="t" style="top:594.54px;height:20px;line-height:20px;font-size:15px;color:#000;letter-spacing:-0.3px;left:1299px;width:311px;text-align:right;">11.7<span style="visibility:hidden">)</span></div><div class="t" style="top:594.54px;height:20px;line-height:20px;font-size:15px;color:#000;letter-spacing:-0.3px;left:1412px;width:320px;text-align:right;">11.2<span style="visibility:hidden">)</span></div><div class="t" style="top:859.54px;height:20px;line-height:20px;font-size:15px;color:#000;letter-spacing:-0.3px;left:241px;width:316px;text-align:right;">43,164,774<span style="visibility:hidden">)</span></div><div class="t" style="top:859.54px;height:20px;line-height:20px;font-size:15px;color:#000;letter-spacing:-0.3px;left:359px;width:316px;text-align:right;">51,742,754<span style="visibility:hidden">)</span></div><div class="t" style="top:859.54px;height:20px;line-height:20px;font-size:15px;color:#000;letter-spacing:-0.3px;left:477px;width:316px;text-align:right;">60,320,734<span style="visibility:hidden">)</span></div><div class="t" style="top:859.54px;height:20px;line-height:20px;font-size:15px;color:#000;letter-spacing:-0.3px;left:595px;width:316px;text-align:right;">68,898,715<span style="visibility:hidden">)</span></div><div class="t" style="top:859.54px;height:20px;line-height:20px;font-size:15px;color:#000;letter-spacing:-0.3px;left:713px;width:311px;text-align:right;">77,476,695<span style="visibility:hidden">)</span></div><div class="t" style="top:859.54px;height:20px;line-height:20px;font-size:15px;color:#000;letter-spacing:-0.3px;left:826px;width:332px;text-align:right;">86,054,675<span style="visibility:hidden">)</span></div><div class="t" style="top:859.54px;height:20px;line-height:20px;font-size:15px;color:#000;letter-spacing:-0.3px;left:960px;width:311px;text-align:right;">94,632,655<span style="visibility:hidden">)</span></div><div class="t" style="top:859.54px;height:20px;line-height:20px;font-size:15px;color:#000;letter-spacing:-0.3px;left:1073px;width:311px;text-align:right;">103,210,636<span style="visibility:hidden">)</span></div><div class="t" style="top:859.54px;height:20px;line-height:20px;font-size:15px;color:#000;letter-spacing:-0.3px;left:1186px;width:311px;text-align:right;">111,788,616<span style="visibility:hidden">)</span></div><div class="t" style="top:859.54px;height:20px;line-height:20px;font-size:15px;color:#000;letter-spacing:-0.3px;left:1299px;width:311px;text-align:right;">120,366,596<span style="visibility:hidden">)</span></div><div class="t" style="top:859.54px;height:20px;line-height:20px;font-size:15px;color:#000;letter-spacing:-0.3px;left:1412px;width:320px;text-align:right;">128,944,576<span style="visibility:hidden">)</span></div><div class="t" style="top:614.54px;height:20px;line-height:20px;font-size:15px;color:#000;letter-spacing:0px;left:30.5px;text-align:left;">Điều kiện</div><div class="t" style="top:879.54px;height:20px;line-height:20px;font-size:15px;color:#000;letter-spacing:0px;left:30.5px;text-align:left;">Điều kiện</div><div class="t" style="top:634.54px;height:20px;line-height:20px;font-size:15px;color:#ff0000;letter-spacing:0px;font-weight:bold;left:-172px;width:369px;text-align:right;">&gt;</div><div class="t" style="top:634.54px;height:20px;line-height:20px;font-size:15px;color:#ff0000;letter-spacing:-0.3px;font-weight:bold;left:-1px;width:286px;text-align:right;">20,000,000<span style="visibility:hidden">)</span></div><div class="t" style="top:634.54px;height:20px;line-height:20px;font-size:15px;color:#ff0000;letter-spacing:-0.3px;font-weight:bold;left:149px;width:290px;text-align:right;">36,626,994<span style="visibility:hidden">)</span></div><div class="t" style="top:899.54px;height:20px;line-height:20px;font-size:15px;color:#ff0000;letter-spacing:0px;font-weight:bold;left:-172px;width:369px;text-align:right;">&gt;</div><div class="t" style="top:899.54px;height:20px;line-height:20px;font-size:15px;color:#ff0000;letter-spacing:-0.3px;font-weight:bold;left:201.5px;text-align:left;">12%</div><div class="t" style="top:899.54px;height:20px;line-height:20px;font-size:15px;color:#ff0000;letter-spacing:-0.3px;font-weight:bold;left:149px;width:290px;text-align:right;">66%</div><div class="t" style="top:919.54px;height:20px;line-height:20px;font-size:15px;color:#000;letter-spacing:-0.3px;left:441px;width:118px;text-align:center;">#NUM!</div><div class="t" style="top:919.54px;height:20px;line-height:20px;font-size:15px;color:#000;letter-spacing:-0.3px;left:559px;width:118px;text-align:center;">#NUM!</div><div class="t" style="top:919.54px;height:20px;line-height:20px;font-size:15px;color:#000;letter-spacing:-0.3px;left:677px;width:118px;text-align:center;">#NUM!</div><div class="t" style="top:919.54px;height:20px;line-height:20px;font-size:15px;color:#000;letter-spacing:-0.3px;left:795px;width:118px;text-align:center;">#NUM!</div><div class="t" style="top:919.54px;height:20px;line-height:20px;font-size:15px;color:#000;letter-spacing:-0.3px;left:913px;width:113px;text-align:center;">#NUM!</div><div class="t" style="top:919.54px;height:20px;line-height:20px;font-size:15px;color:#000;letter-spacing:-0.3px;left:1026px;width:134px;text-align:center;">#NUM!</div><div class="t" style="top:919.54px;height:20px;line-height:20px;font-size:15px;color:#000;letter-spacing:-0.3px;left:1160px;width:113px;text-align:center;">#NUM!</div><div class="t" style="top:919.54px;height:20px;line-height:20px;font-size:15px;color:#000;letter-spacing:-0.3px;left:1273px;width:113px;text-align:center;">#NUM!</div><div class="t" style="top:919.54px;height:20px;line-height:20px;font-size:15px;color:#000;letter-spacing:-0.3px;left:1386px;width:113px;text-align:center;">#NUM!</div><div class="t" style="top:919.54px;height:20px;line-height:20px;font-size:15px;color:#000;letter-spacing:-0.3px;left:1499px;width:113px;text-align:center;">#NUM!</div><div class="t" style="top:919.54px;height:20px;line-height:20px;font-size:15px;color:#9c0006;letter-spacing:-0.3px;left:1412px;width:320px;text-align:right;">-37%</div><div class="t" style="top:939.54px;height:20px;line-height:20px;font-size:15px;color:#000;letter-spacing:-0.3px;left:441px;width:118px;text-align:center;">#NUM!</div><div class="t" style="top:939.54px;height:20px;line-height:20px;font-size:15px;color:#000;letter-spacing:-0.3px;left:559px;width:118px;text-align:center;">#NUM!</div><div class="t" style="top:939.54px;height:20px;line-height:20px;font-size:15px;color:#000;letter-spacing:-0.3px;left:677px;width:118px;text-align:center;">#NUM!</div><div class="t" style="top:939.54px;height:20px;line-height:20px;font-size:15px;color:#000;letter-spacing:-0.3px;left:795px;width:118px;text-align:center;">#NUM!</div><div class="t" style="top:939.54px;height:20px;line-height:20px;font-size:15px;color:#000;letter-spacing:-0.3px;left:913px;width:113px;text-align:center;">#NUM!</div><div class="t" style="top:939.54px;height:20px;line-height:20px;font-size:15px;color:#000;letter-spacing:-0.3px;left:1026px;width:134px;text-align:center;">#NUM!</div><div class="t" style="top:939.54px;height:20px;line-height:20px;font-size:15px;color:#000;letter-spacing:-0.3px;left:1160px;width:113px;text-align:center;">#NUM!</div><div class="t" style="top:939.54px;height:20px;line-height:20px;font-size:15px;color:#9c0006;letter-spacing:-0.3px;left:1073px;width:311px;text-align:right;">-27%</div><div class="t" style="top:939.54px;height:20px;line-height:20px;font-size:15px;color:#9c0006;letter-spacing:-0.3px;left:1186px;width:311px;text-align:right;">-15%</div><div class="t" style="top:939.54px;height:20px;line-height:20px;font-size:15px;color:#9c0006;letter-spacing:-0.3px;left:1299px;width:311px;text-align:right;">-5%</div><div class="t" style="top:939.54px;height:20px;line-height:20px;font-size:15px;color:#9c0006;letter-spacing:-0.3px;left:1412px;width:320px;text-align:right;">5%</div>
<div class="t" style="left:29px;width:171px;text-align:center;top:492.04px;height:20px;line-height:20px;font-size:15px;font-weight:bold;color:#ff0000">Thời gian hoàn vốn</div><div class="t" style="left:200px;width:88px;text-align:center;top:462.04px;height:20px;line-height:20px;font-size:15px;font-weight:bold;color:#000">% thay đổi</div><div class="t" style="left:200px;width:88px;text-align:center;top:482.04px;height:20px;line-height:20px;font-size:15px;font-weight:bold;color:#000">Số giờ chơi</div><div class="t" style="left:200px;width:88px;text-align:center;top:502.04px;height:20px;line-height:20px;font-size:15px;font-weight:bold;color:#000">chơi bình</div><div class="t" style="left:200px;width:88px;text-align:center;top:522.04px;height:20px;line-height:20px;font-size:15px;font-weight:bold;color:#000">quân/máy</div><div class="t" style="left:29px;width:171px;text-align:center;top:747.04px;height:20px;line-height:20px;font-size:15px;font-weight:bold;color:#ff0000">Thu nhập ròng bình</div><div class="t" style="left:29px;width:171px;text-align:center;top:767.04px;height:20px;line-height:20px;font-size:15px;font-weight:bold;color:#ff0000">quân 1 tháng</div><div class="t" style="left:200px;width:88px;text-align:center;top:727.04px;height:20px;line-height:20px;font-size:15px;font-weight:bold;color:#000">% thay đổi</div><div class="t" style="left:200px;width:88px;text-align:center;top:747.04px;height:20px;line-height:20px;font-size:15px;font-weight:bold;color:#000">Số giờ chơi</div><div class="t" style="left:200px;width:88px;text-align:center;top:767.04px;height:20px;line-height:20px;font-size:15px;font-weight:bold;color:#000">chơi bình</div><div class="t" style="left:200px;width:88px;text-align:center;top:787.04px;height:20px;line-height:20px;font-size:15px;font-weight:bold;color:#000">quân/máy</div>
<!-- selection -->
<div class="abs" style="left:1025px;top:487px;width:137px;height:28px;border:2px solid #217346"></div>
<div class="abs" style="left:1157px;top:510px;width:6px;height:6px;background:#217346;border:1px solid #fff"></div>
<!-- comment indicators -->
<svg class="abs" style="left:281px;top:289px" width="6" height="6"><path d="M0 0 L6 0 L6 6 Z" fill="#ff0000"/></svg>
<svg class="abs" style="left:281px;top:309px" width="6" height="6"><path d="M0 0 L6 0 L6 6 Z" fill="#ff0000"/></svg>

<!-- HEADERS -->
<div class="abs" style="left:0;top:269px;width:1889px;height:20px;background:#e6e6e6"></div>
<div class="abs" style="left:0;top:289px;width:28px;height:664px;background:#e6e6e6"></div>
<div class="ch" style="left:29px;width:170px;color:#222">A</div><div class="hl" style="left:199px;top:269px;width:1px;height:19px"></div><div class="ch" style="left:200px;width:87px;color:#222">B</div><div class="hl" style="left:287px;top:269px;width:1px;height:19px"></div><div class="ch" style="left:288px;width:61px;color:#222">C</div><div class="hl" style="left:349px;top:269px;width:1px;height:19px"></div><div class="ch" style="left:350px;width:91px;color:#222">D</div><div class="hl" style="left:441px;top:269px;width:1px;height:19px"></div><div class="ch" style="left:442px;width:117px;color:#222">E</div><div class="hl" style="left:559px;top:269px;width:1px;height:19px"></div><div class="ch" style="left:560px;width:117px;color:#222">F</div><div class="hl" style="left:677px;top:269px;width:1px;height:19px"></div><div class="ch" style="left:678px;width:117px;color:#222">G</div><div class="hl" style="left:795px;top:269px;width:1px;height:19px"></div><div class="ch" style="left:796px;width:117px;color:#222">H</div><div class="hl" style="left:913px;top:269px;width:1px;height:19px"></div><div class="ch" style="left:914px;width:112px;color:#222">I</div><div class="hl" style="left:1026px;top:269px;width:1px;height:19px"></div><div class="ch" style="left:1027px;width:133px;background:#d2d2d2;color:#217346">J</div><div class="hl" style="left:1160px;top:269px;width:1px;height:19px"></div><div class="ch" style="left:1161px;width:112px;color:#222">K</div><div class="hl" style="left:1273px;top:269px;width:1px;height:19px"></div><div class="ch" style="left:1274px;width:112px;color:#222">L</div><div class="hl" style="left:1386px;top:269px;width:1px;height:19px"></div><div class="ch" style="left:1387px;width:112px;color:#222">M</div><div class="hl" style="left:1499px;top:269px;width:1px;height:19px"></div><div class="ch" style="left:1500px;width:112px;color:#222">N</div><div class="hl" style="left:1612px;top:269px;width:1px;height:19px"></div><div class="ch" style="left:1613px;width:121px;color:#222">O</div><div class="hl" style="left:1734px;top:269px;width:1px;height:19px"></div><div class="ch" style="left:1735px;width:72px;color:#222">P</div><div class="hl" style="left:1807px;top:269px;width:1px;height:19px"></div><div class="ch" style="left:1808px;width:72px;color:#222">Q</div><div class="hl" style="left:1880px;top:269px;width:1px;height:19px"></div><div class="rh" style="top:289px;height:19px;color:#222;line-height:21px">1</div><div class="hl" style="left:0px;top:308px;width:28px;height:1px"></div><div class="rh" style="top:309px;height:19px;color:#222;line-height:21px">2</div><div class="hl" style="left:0px;top:328px;width:28px;height:1px"></div><div class="rh" style="top:329px;height:19px;color:#222;line-height:21px">3</div><div class="hl" style="left:0px;top:348px;width:28px;height:1px"></div><div class="rh" style="top:349px;height:19px;color:#222;line-height:21px">4</div><div class="hl" style="left:0px;top:368px;width:28px;height:1px"></div><div class="rh" style="top:369px;height:19px;color:#222;line-height:21px">5</div><div class="hl" style="left:0px;top:388px;width:28px;height:1px"></div><div class="rh" style="top:389px;height:19px;color:#222;line-height:21px">6</div><div class="hl" style="left:0px;top:408px;width:28px;height:1px"></div><div class="rh" style="top:409px;height:19px;color:#222;line-height:21px">7</div><div class="hl" style="left:0px;top:428px;width:28px;height:1px"></div><div class="rh" style="top:429px;height:19px;color:#222;line-height:21px">8</div><div class="hl" style="left:0px;top:448px;width:28px;height:1px"></div><div class="rh" style="top:449px;height:19px;color:#222;line-height:21px">9</div><div class="hl" style="left:0px;top:468px;width:28px;height:1px"></div><div class="rh" style="top:469px;height:19px;color:#222;line-height:21px">10</div><div class="hl" style="left:0px;top:488px;width:28px;height:1px"></div><div class="rh" style="top:489px;height:24px;background:#d2d2d2;color:#217346;line-height:26px">11</div><div class="hl" style="left:0px;top:513px;width:28px;height:1px"></div><div class="rh" style="top:514px;height:19px;color:#222;line-height:21px">12</div><div class="hl" style="left:0px;top:533px;width:28px;height:1px"></div><div class="rh" style="top:534px;height:19px;color:#222;line-height:21px">13</div><div class="hl" style="left:0px;top:553px;width:28px;height:1px"></div><div class="rh" style="top:554px;height:19px;color:#222;line-height:21px">14</div><div class="hl" style="left:0px;top:573px;width:28px;height:1px"></div><div class="rh" style="top:574px;height:19px;color:#222;line-height:21px">15</div><div class="hl" style="left:0px;top:593px;width:28px;height:1px"></div><div class="rh" style="top:594px;height:19px;color:#222;line-height:21px">16</div><div class="hl" style="left:0px;top:613px;width:28px;height:1px"></div><div class="rh" style="top:614px;height:19px;color:#222;line-height:21px">17</div><div class="hl" style="left:0px;top:633px;width:28px;height:1px"></div><div class="rh" style="top:634px;height:19px;color:#222;line-height:21px">18</div><div class="hl" style="left:0px;top:653px;width:28px;height:1px"></div><div class="rh" style="top:654px;height:19px;color:#222;line-height:21px">19</div><div class="hl" style="left:0px;top:673px;width:28px;height:1px"></div><div class="rh" style="top:674px;height:19px;color:#222;line-height:21px">20</div><div class="hl" style="left:0px;top:693px;width:28px;height:1px"></div><div class="rh" style="top:694px;height:19px;color:#222;line-height:21px">21</div><div class="hl" style="left:0px;top:713px;width:28px;height:1px"></div><div class="rh" style="top:714px;height:19px;color:#222;line-height:21px">22</div><div class="hl" style="left:0px;top:733px;width:28px;height:1px"></div><div class="rh" style="top:734px;height:19px;color:#222;line-height:21px">23</div><div class="hl" style="left:0px;top:753px;width:28px;height:1px"></div><div class="rh" style="top:754px;height:24px;color:#222;line-height:26px">24</div><div class="hl" style="left:0px;top:778px;width:28px;height:1px"></div><div class="rh" style="top:779px;height:19px;color:#222;line-height:21px">25</div><div class="hl" style="left:0px;top:798px;width:28px;height:1px"></div><div class="rh" style="top:799px;height:19px;color:#222;line-height:21px">26</div><div class="hl" style="left:0px;top:818px;width:28px;height:1px"></div><div class="rh" style="top:819px;height:19px;color:#222;line-height:21px">27</div><div class="hl" style="left:0px;top:838px;width:28px;height:1px"></div><div class="rh" style="top:839px;height:19px;color:#222;line-height:21px">28</div><div class="hl" style="left:0px;top:858px;width:28px;height:1px"></div><div class="rh" style="top:859px;height:19px;color:#222;line-height:21px">29</div><div class="hl" style="left:0px;top:878px;width:28px;height:1px"></div><div class="rh" style="top:879px;height:19px;color:#222;line-height:21px">30</div><div class="hl" style="left:0px;top:898px;width:28px;height:1px"></div><div class="rh" style="top:899px;height:19px;color:#222;line-height:21px">31</div><div class="hl" style="left:0px;top:918px;width:28px;height:1px"></div><div class="rh" style="top:919px;height:19px;color:#222;line-height:21px">32</div><div class="hl" style="left:0px;top:938px;width:28px;height:1px"></div><div class="rh" style="top:939px;height:14px;color:#222;line-height:21px">33</div>
<div class="abs" style="left:0;top:288px;width:1889px;height:1px;background:#9e9e9e"></div>
<div class="abs" style="left:28px;top:269px;width:1px;height:684px;background:#9e9e9e"></div>
<div class="abs" style="left:1026px;top:287px;width:135px;height:2px;background:#217346"></div>
<div class="abs" style="left:27px;top:488px;width:2px;height:26px;background:#217346"></div>
<svg class="abs" style="left:13px;top:273px" width="12" height="12"><path d="M12 0 L12 12 L0 12 Z" fill="#b4b4b4"/></svg>
<div class="abs" style="left:1889px;top:289px;width:1px;height:664px;background:#9e9e9e"></div>
<div class="abs" style="left:0;top:953px;width:1889px;height:1px;background:#9e9e9e"></div>

<!-- V SCROLL -->
<div class="abs" style="left:1890px;top:269px;width:30px;height:684px;background:#e6e6e6"></div>
<div class="abs" style="left:1890px;top:295px;width:27px;height:635px;background:#f0f0f0"></div>
<div class="abs" style="left:1892px;top:270px;width:25px;height:24px;background:#fff;border:1px solid #9e9e9e"></div>
<svg class="abs" style="left:1899px;top:279px" width="12" height="7"><path d="M0 7 L6 0 L12 7 Z" fill="#222"/></svg>
<div class="abs" style="left:1892px;top:296px;width:25px;height:472px;background:#fff;border:1px solid #9e9e9e"></div>
<div class="abs" style="left:1892px;top:930px;width:25px;height:24px;background:#fff;border:1px solid #9e9e9e"></div>
<svg class="abs" style="left:1899px;top:938px" width="12" height="7"><path d="M0 0 L12 0 L6 7 Z" fill="#222"/></svg>

<!-- SHEET TABS -->
<div class="abs" style="left:0;top:954px;width:1920px;height:33px;background:#e6e6e6"></div>
<svg class="abs" style="left:27px;top:962px" width="50" height="14"><path d="M8 1 L2 7 L8 13 Z" fill="#b9b9b9"/><path d="M37 1 L43 7 L37 13 Z" fill="#b9b9b9"/></svg>
<div class="abs" style="left:118px;top:957px;width:1px;height:25px;background:#a6a6a6"></div>
<div class="abs" style="left:135px;top:957px;font-size:19px;line-height:24px;color:#444;white-space:nowrap">Tóm tắt KQKD</div>
<div class="abs" style="left:279px;top:957px;width:1px;height:25px;background:#a6a6a6"></div>
<div class="abs" style="left:295px;top:957px;font-size:19px;line-height:24px;color:#444;white-space:nowrap">Diện tích</div>
<div class="abs" style="left:389px;top:957px;width:1px;height:25px;background:#a6a6a6"></div>
<div class="abs" style="left:407px;top:957px;font-size:19px;line-height:24px;color:#444;white-space:nowrap">Tổng vốn đầu tư</div>
<div class="abs" style="left:571px;top:957px;width:1px;height:25px;background:#a6a6a6"></div>
<div class="abs" style="left:590px;top:957px;font-size:19px;line-height:24px;color:#444;white-space:nowrap">Thông số kinh doanh</div>
<div class="abs" style="left:794px;top:957px;width:1px;height:25px;background:#a6a6a6"></div>
<div class="abs" style="left:912px;top:953px;width:179px;height:31px;background:#fff;border-left:1px solid #a6a6a6;border-right:1px solid #a6a6a6"></div>
<div class="abs" style="left:912px;top:981px;width:179px;height:3px;background:#217346"></div>
<div class="abs" style="left:810px;top:957px;font-size:19px;line-height:24px;color:#444;white-space:nowrap">Dòng tiền</div>
<div class="abs" style="left:923px;top:956px;font-size:20px;line-height:24px;font-weight:bold;color:#217346;white-space:nowrap;letter-spacing:0.3px">Độ nhạy 2 chiều</div>
<div class="abs" style="left:1109px;top:957px;font-size:19px;line-height:24px;color:#444;white-space:nowrap">Độ nhạy 1 chiều</div>
<div class="abs" style="left:1267px;top:957px;width:1px;height:25px;background:#a6a6a6"></div>
<svg class="abs" style="left:1306px;top:958px" width="24" height="24"><circle cx="12" cy="12" r="10.5" stroke="#777" stroke-width="1.3" fill="none"/><path d="M12 6.5 L12 17.5 M6.5 12 L17.5 12" stroke="#777" stroke-width="1.4"/></svg>
<div class="abs" style="left:1352px;top:963px;width:3px;height:3px;background:#aaa"></div>
<div class="abs" style="left:1352px;top:969px;width:3px;height:3px;background:#aaa"></div>
<div class="abs" style="left:1352px;top:975px;width:3px;height:3px;background:#aaa"></div>
<div class="abs" style="left:1372px;top:957px;width:504px;height:25px;background:#fff;border:1px solid #9e9e9e"></div>
<div class="abs" style="left:1396px;top:957px;width:1px;height:25px;background:#9e9e9e"></div>
<div class="abs" style="left:1841px;top:957px;width:1px;height:25px;background:#9e9e9e"></div>
<div class="abs" style="left:1842px;top:958px;width:23px;height:23px;background:#f0f0f0"></div>
<div class="abs" style="left:1864px;top:957px;width:25px;height:25px;background:#fff;border:1px solid #9e9e9e"></div>
<svg class="abs" style="left:1379px;top:963px" width="8" height="13"><path d="M7 0 L7 13 L0 6.5 Z" fill="#222"/></svg>
<svg class="abs" style="left:1873px;top:963px" width="8" height="13"><path d="M0 0 L0 13 L7 6.5 Z" fill="#222"/></svg>

<!-- STATUS BAR -->
<div class="abs" style="left:0;top:987px;width:1920px;height:29px;background:#f3f2f1"></div>
<div class="abs" style="left:0;top:987px;width:1920px;height:1px;background:#d2d0ce"></div>
<div class="abs" style="left:10px;top:996px;font-size:15.5px;line-height:20px;color:#505050;letter-spacing:-0.2px">Ready</div>
<svg class="abs" style="left:76px;top:988px" width="32" height="28"><circle cx="14.3" cy="8.8" r="2.6" stroke="#444" stroke-width="1.5" fill="none"/><path d="M18.3 14 L22.5 12.5 Q24.5 11.5 22.5 9.5 L17 11 L11.6 11 L6.5 9.5 Q4.5 11 6.5 12.5 L10 14 L10 18 L8.5 24 Q10 27 12 24 L14.3 18.5 L15.8 22" stroke="#444" stroke-width="1.5" fill="none" stroke-linejoin="round"/><path d="M16.5 16.5 L25.6 25.6 M25.6 16.5 L16.5 25.6" stroke="#444" stroke-width="1.5"/></svg>
<div class="abs" style="left:107px;top:996px;font-size:15.5px;line-height:20px;color:#505050;white-space:nowrap;letter-spacing:-0.2px">Accessibility: Investigate</div>
<div class="abs" style="left:1475px;top:988px;width:60px;height:28px;background:#d2d0ce"></div>
<svg class="abs" style="left:1493px;top:993px" width="22" height="20"><rect x="1" y="1" width="19" height="18" stroke="#3b3a39" stroke-width="1.8" fill="none"/><path d="M7.5 1 L7.5 19 M13.5 1 L13.5 19 M1 7 L20 7 M1 13 L20 13" stroke="#3b3a39" stroke-width="1.8"/></svg>
<svg class="abs" style="left:1554px;top:993px" width="24" height="20"><rect x="1" y="1" width="21" height="18" stroke="#3b3a39" stroke-width="1.5" fill="none"/><rect x="5" y="4" width="13" height="12" stroke="#3b3a39" stroke-width="1.2" fill="none"/><path d="M8 7.5 L15 7.5 M8 10 L15 10 M8 12.5 L15 12.5" stroke="#3b3a39" stroke-width="1.2"/></svg>
<svg class="abs" style="left:1614px;top:993px" width="24" height="20"><path d="M1 1 L22 1 L22 19 L1 19 Z M1 11 L13 11 L13 1 M7 1 L7 11" stroke="#3b3a39" stroke-width="1.5" fill="none"/></svg>
<div class="abs" style="left:1663px;top:1003px;width:11px;height:1px;background:#555"></div>
<div class="abs" style="left:1683px;top:1003px;width:149px;height:2px;background:#3b3a39"></div>
<div class="abs" style="left:1730px;top:995px;width:8px;height:17px;background:#3b3a39"></div>
<div class="abs" style="left:1757px;top:999px;width:2px;height:10px;background:#3b3a39"></div>
<svg class="abs" style="left:1839px;top:997px" width="13" height="13"><path d="M6.5 0 L6.5 13 M0 6.5 L13 6.5" stroke="#444" stroke-width="1.3"/></svg>
<div class="abs" style="left:1868px;top:993px;font-size:17px;line-height:20px;color:#555">70%</div>
</body></html>
